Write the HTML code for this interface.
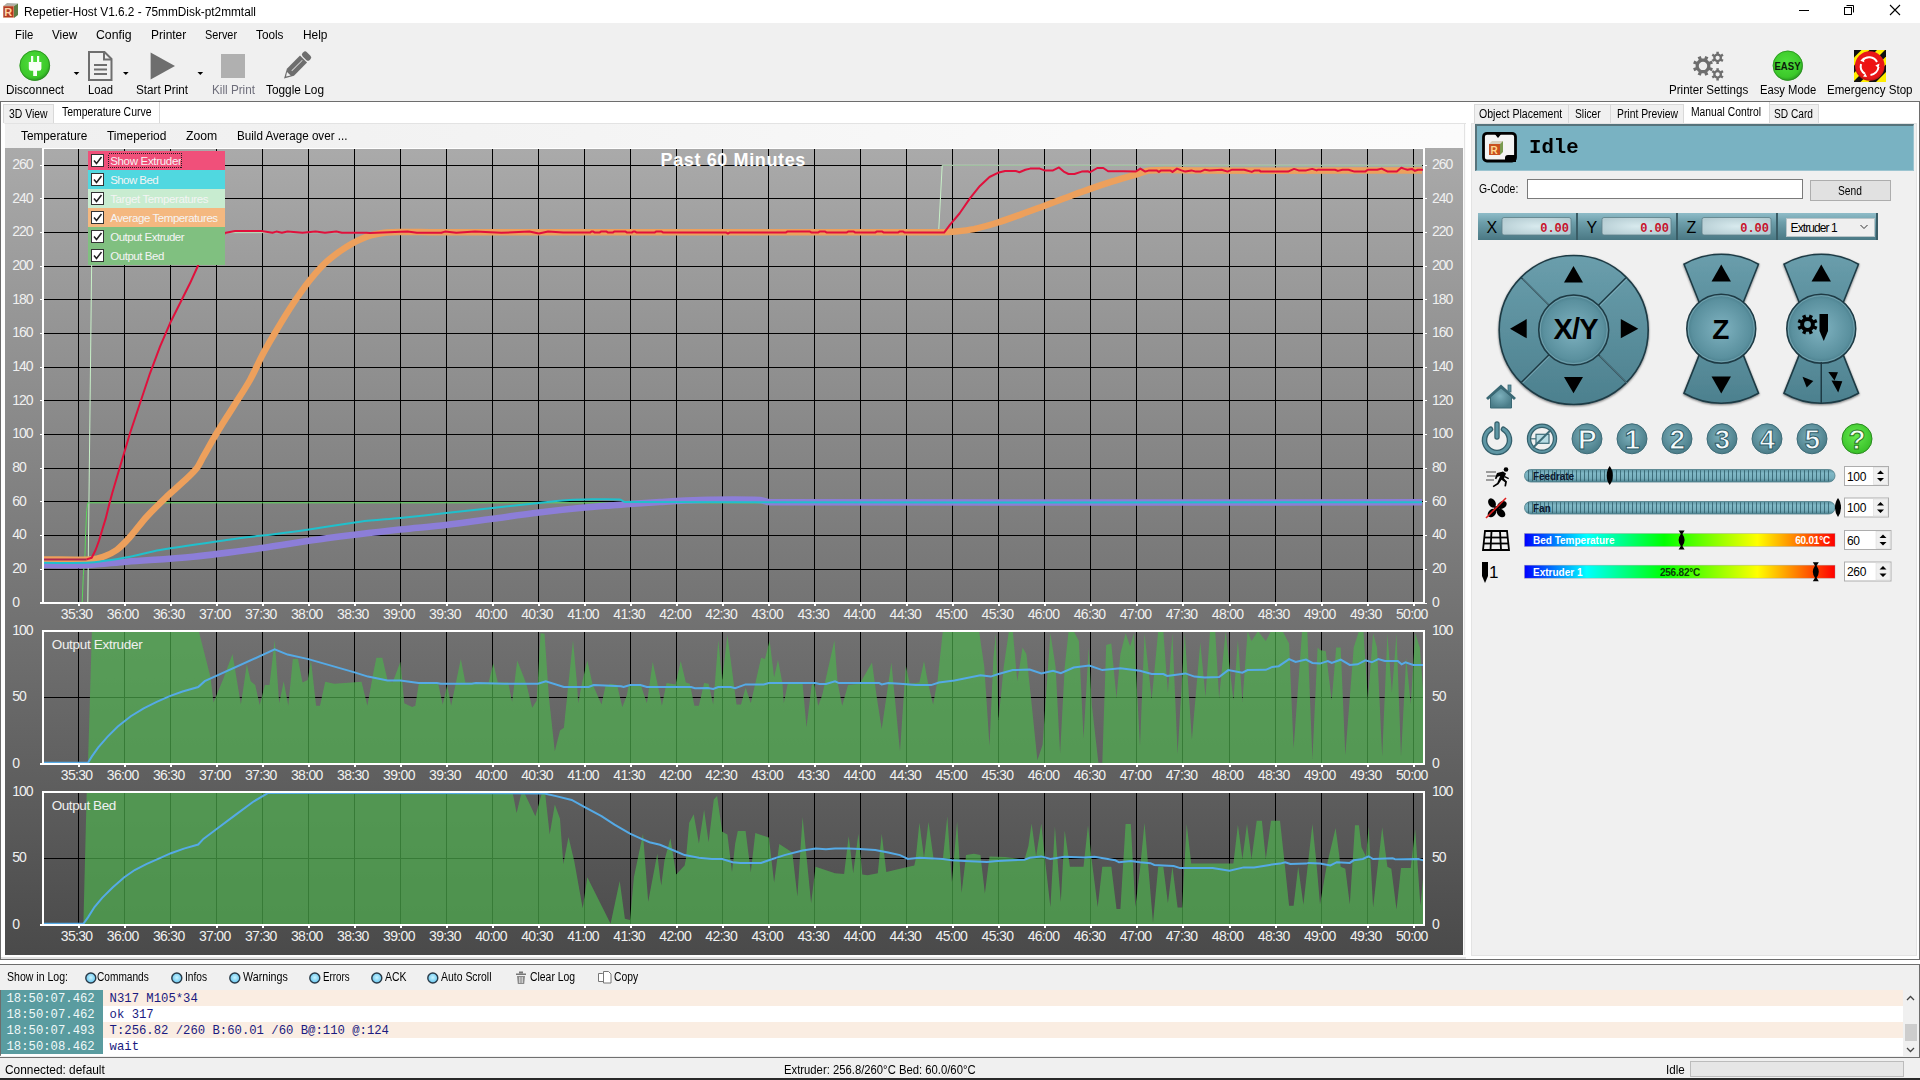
<!DOCTYPE html>
<html><head><meta charset="utf-8"><title>Repetier-Host</title><style>
*{box-sizing:border-box}
html,body{margin:0;padding:0;width:1920px;height:1080px;overflow:hidden;background:#f0f0f0;font-family:'Liberation Sans',sans-serif;font-size:12px;color:#000}
.a{position:absolute}
.t{position:absolute;white-space:nowrap;line-height:1}
svg{overflow:hidden}
</style></head>
<body>
<div class="a" style="left:0px;top:0px;width:1920px;height:23px;background:#fff"></div><svg class="a" style="left:0;top:0" width="22" height="22" viewBox="0 0 22 22">
<path d="M3.5 6 L7 3 L18 3.5 L14 6 Z" fill="#b0b0a8"/>
<path d="M14 6 L18 3.5 L18 15 L14 18 Z" fill="#5d7d44"/>
<rect x="3" y="5.8" width="11" height="12" fill="#e0a080"/>
<rect x="3.6" y="6.4" width="9.8" height="10.8" fill="#b23a22"/>
<text x="4.3" y="16.3" font-family="Liberation Sans" font-weight="bold" font-size="11" fill="#ffd2a4">R</text>
</svg><div class="t" style="left:24px;top:5.80px;font-size:12px;color:#000;font-family:'Liberation Sans';transform:scaleX(0.9855);transform-origin:0 0;">Repetier-Host V1.6.2 - 75mmDisk-pt2mmtall</div><svg class="a" style="left:1790px;top:0" width="130" height="23">
<rect x="9" y="10" width="10" height="1" fill="#000"/>
<path d="M56.5 5.5 h7 v7" fill="none" stroke="#000"/>
<rect x="54.5" y="7.5" width="7" height="7" fill="none" stroke="#000"/>
<path d="M100 5 L110 15 M110 5 L100 15" stroke="#000" stroke-width="1.1"/>
</svg><div class="t" style="left:15px;top:28.80px;font-size:12px;color:#000;font-family:'Liberation Sans';transform:scaleX(0.9435);transform-origin:0 0;">File</div><div class="t" style="left:51.75px;top:28.80px;font-size:12px;color:#000;font-family:'Liberation Sans';transform:scaleX(0.9788);transform-origin:0 0;">View</div><div class="t" style="left:96.25px;top:28.80px;font-size:12px;color:#000;font-family:'Liberation Sans';transform:scaleX(1.0234);transform-origin:0 0;">Config</div><div class="t" style="left:151px;top:28.80px;font-size:12px;color:#000;font-family:'Liberation Sans';transform:scaleX(0.9973);transform-origin:0 0;">Printer</div><div class="t" style="left:205px;top:28.80px;font-size:12px;color:#000;font-family:'Liberation Sans';transform:scaleX(0.9054);transform-origin:0 0;">Server</div><div class="t" style="left:256.25px;top:28.80px;font-size:12px;color:#000;font-family:'Liberation Sans';transform:scaleX(0.9816);transform-origin:0 0;">Tools</div><div class="t" style="left:303px;top:28.80px;font-size:12px;color:#000;font-family:'Liberation Sans';transform:scaleX(0.9924);transform-origin:0 0;">Help</div><svg class="a" style="left:0;top:40px" width="1920" height="50" viewBox="0 40 1920 50"><defs><radialGradient id="gg" cx="0.45" cy="0.4" r="0.6"><stop offset="0" stop-color="#4fe03c"/><stop offset="0.8" stop-color="#3cc82a"/><stop offset="1" stop-color="#2a9a22"/></radialGradient><radialGradient id="rg" cx="0.5" cy="0.45" r="0.55"><stop offset="0" stop-color="#f01010"/><stop offset="0.85" stop-color="#e81818"/><stop offset="1" stop-color="#b01010"/></radialGradient><clipPath id="esq"><rect x="1854" y="50" width="32" height="32"/></clipPath></defs><circle cx="34.8" cy="65.6" r="15.2" fill="url(#gg)"/><circle cx="34.8" cy="65.6" r="14.9" fill="none" stroke="#2a8a20" stroke-width="0.8"/><path d="M31 56 h2.2 v6 h3.8 v-6 h2.2 v6 h2.2 v6.5 q0,2.2 -2.2,2.2 h-2.2 v5.4 h-3.8 v-5.4 h-2.2 q-2.2,0 -2.2,-2.2 v-6.5 h2.2z" fill="#f8fff8"/><path d="M73.7 72 h5.6 l-2.8 3z" fill="#000"/><path d="M123 72 h5.6 l-2.8 3z" fill="#000"/><path d="M197.5 72 h5.6 l-2.8 3z" fill="#000"/><path d="M89 52 h15.5 l7 7 v21 h-22.5z" fill="none" stroke="#6e6e6e" stroke-width="2"/><path d="M104 52 v7.5 h7.5" fill="none" stroke="#6e6e6e" stroke-width="2"/><rect x="94" y="64" width="13" height="2" fill="#6e6e6e"/><rect x="94" y="68.5" width="13" height="2" fill="#6e6e6e"/><rect x="94" y="73" width="13" height="2" fill="#6e6e6e"/><path d="M150.6 52.5 L175 66 L150.6 79.4z" fill="#6e6e6e"/><rect x="221" y="54" width="24" height="24" fill="#b0b0b0"/><g transform="translate(296.3,66.3) rotate(45)"><rect x="-5" y="-17.5" width="10" height="6" rx="2.5" fill="#6e6e6e"/><path d="M-5 -10.2 h10 v18.5 l-5 9 l-5 -9z" fill="#6e6e6e"/><rect x="-0.45" y="-8.5" width="0.9" height="15" fill="#d8d8d8"/><path d="M-2.6 10.5 l2.6 4 l2.6 -4z" fill="#f0f0f0"/></g><path d="M1710.40,65.90 L1710.28,67.23 L1712.94,68.20 L1711.65,71.30 L1709.09,70.11 L1708.23,71.13 L1707.21,71.99 L1708.40,74.55 L1705.30,75.84 L1704.33,73.18 L1703.00,73.30 L1701.67,73.18 L1700.70,75.84 L1697.60,74.55 L1698.79,71.99 L1697.77,71.13 L1696.91,70.11 L1694.35,71.30 L1693.06,68.20 L1695.72,67.23 L1695.60,65.90 L1695.72,64.57 L1693.06,63.60 L1694.35,60.50 L1696.91,61.69 L1697.77,60.67 L1698.79,59.81 L1697.60,57.25 L1700.70,55.96 L1701.67,58.62 L1703.00,58.50 L1704.33,58.62 L1705.30,55.96 L1708.40,57.25 L1707.21,59.81 L1708.23,60.67 L1709.09,61.69 L1711.65,60.50 L1712.94,63.60 L1710.28,64.57Z M1707.20,65.90 A4.2,4.2 0 1,0 1698.80,65.90 A4.2,4.2 0 1,0 1707.20,65.90Z" fill="#6e6e6e" fill-rule="evenodd"/><path d="M1722.00,57.80 L1721.86,58.89 L1723.59,59.75 L1722.28,62.02 L1720.68,60.94 L1719.80,61.61 L1718.78,62.04 L1718.91,63.96 L1716.29,63.96 L1716.42,62.04 L1715.40,61.61 L1714.52,60.94 L1712.92,62.02 L1711.61,59.75 L1713.34,58.89 L1713.20,57.80 L1713.34,56.71 L1711.61,55.85 L1712.92,53.58 L1714.52,54.66 L1715.40,53.99 L1716.42,53.56 L1716.29,51.64 L1718.91,51.64 L1718.78,53.56 L1719.80,53.99 L1720.68,54.66 L1722.28,53.58 L1723.59,55.85 L1721.86,56.71Z M1719.70,57.80 A2.1,2.1 0 1,0 1715.50,57.80 A2.1,2.1 0 1,0 1719.70,57.80Z" fill="#6e6e6e" fill-rule="evenodd"/><path d="M1722.00,74.30 L1721.86,75.39 L1723.59,76.25 L1722.28,78.52 L1720.68,77.44 L1719.80,78.11 L1718.78,78.54 L1718.91,80.46 L1716.29,80.46 L1716.42,78.54 L1715.40,78.11 L1714.52,77.44 L1712.92,78.52 L1711.61,76.25 L1713.34,75.39 L1713.20,74.30 L1713.34,73.21 L1711.61,72.35 L1712.92,70.08 L1714.52,71.16 L1715.40,70.49 L1716.42,70.06 L1716.29,68.14 L1718.91,68.14 L1718.78,70.06 L1719.80,70.49 L1720.68,71.16 L1722.28,70.08 L1723.59,72.35 L1721.86,73.21Z M1719.70,74.30 A2.1,2.1 0 1,0 1715.50,74.30 A2.1,2.1 0 1,0 1719.70,74.30Z" fill="#6e6e6e" fill-rule="evenodd"/><circle cx="1787.8" cy="65.7" r="15" fill="url(#gg)"/><circle cx="1787.8" cy="65.7" r="14.7" fill="none" stroke="#2a8a20" stroke-width="0.7"/><text x="1774.5" y="69.8" font-family="Liberation Sans" font-weight="bold" font-size="10.4" fill="#0a1a0a" textLength="26" lengthAdjust="spacingAndGlyphs">EASY</text><g clip-path="url(#esq)"><rect x="1854" y="50" width="32" height="32" fill="#ffee00"/><path d="M1775.5 82 L1807.5 50 L1815.0 50 L1783.0 82z" fill="#111"/><path d="M1791.0 82 L1823.0 50 L1830.5 50 L1798.5 82z" fill="#111"/><path d="M1806.5 82 L1838.5 50 L1846.0 50 L1814.0 82z" fill="#111"/><path d="M1822.0 82 L1854.0 50 L1861.5 50 L1829.5 82z" fill="#111"/><path d="M1837.5 82 L1869.5 50 L1877.0 50 L1845.0 82z" fill="#111"/><path d="M1853.0 82 L1885.0 50 L1892.5 50 L1860.5 82z" fill="#111"/><path d="M1868.5 82 L1900.5 50 L1908.0 50 L1876.0 82z" fill="#111"/></g><circle cx="1869.8" cy="66" r="14.8" fill="url(#rg)"/><g fill="none" stroke="#fff" stroke-width="2"><path d="M1862.2 60.5 A9 9 0 0 1 1877 62"/><path d="M1878.5 67 A9 9 0 0 1 1870.5 75"/><path d="M1865 73.8 A9 9 0 0 1 1861 64"/></g><g fill="#fff"><path d="M1863.8 57.5 l-3.5 3.2 l4 1.5z"/><path d="M1879.5 63.5 l-1 4.5 l-3.2 -2.5z"/><path d="M1867 77 l-4 -0.5 l2.5 -3z"/></g></svg><div class="t" style="left:5.6px;top:83.80px;font-size:12px;color:#000;font-family:'Liberation Sans';transform:scaleX(0.9794);transform-origin:0 0;">Disconnect</div><div class="t" style="left:87.5px;top:83.80px;font-size:12px;color:#000;font-family:'Liberation Sans';transform:scaleX(0.9362);transform-origin:0 0;">Load</div><div class="t" style="left:136px;top:83.80px;font-size:12px;color:#000;font-family:'Liberation Sans';transform:scaleX(0.9745);transform-origin:0 0;">Start Print</div><div class="t" style="left:211.7px;top:83.80px;font-size:12px;color:#6d6d7a;font-family:'Liberation Sans';transform:scaleX(0.9769);transform-origin:0 0;">Kill Print</div><div class="t" style="left:266.4px;top:83.80px;font-size:12px;color:#000;font-family:'Liberation Sans';transform:scaleX(0.9878);transform-origin:0 0;">Toggle Log</div><div class="t" style="left:1668.8px;top:83.80px;font-size:12px;color:#000;font-family:'Liberation Sans';transform:scaleX(0.9653);transform-origin:0 0;">Printer Settings</div><div class="t" style="left:1759.5px;top:83.80px;font-size:12px;color:#000;font-family:'Liberation Sans';transform:scaleX(0.9362);transform-origin:0 0;">Easy Mode</div><div class="t" style="left:1827px;top:83.80px;font-size:12px;color:#000;font-family:'Liberation Sans';transform:scaleX(0.9637);transform-origin:0 0;">Emergency Stop</div><div class="a" style="left:0px;top:101px;width:1920px;height:1px;background:#6d6d6d"></div><div class="a" style="left:0px;top:102px;width:1466px;height:1px;background:#fff"></div><div class="a" style="left:0px;top:101px;width:1px;height:862px;background:#6d6d6d"></div><div class="a" style="left:1px;top:102px;width:1465px;height:862px;background:#fff"></div><div class="a" style="left:3px;top:104px;width:51px;height:19px;background:#f0f0f0;border:1px solid #d9d9d9;border-bottom:none"></div><div class="t" style="left:9.4px;top:107.80px;font-size:12px;color:#000;font-family:'Liberation Sans';transform:scaleX(0.8658);transform-origin:0 0;">3D View</div><div class="a" style="left:159px;top:102px;width:1px;height:21px;background:#d9d9d9"></div><div class="t" style="left:61.5px;top:106.30px;font-size:12px;color:#000;font-family:'Liberation Sans';transform:scaleX(0.8713);transform-origin:0 0;">Temperature Curve</div><div class="a" style="left:4px;top:123px;width:1462px;height:838px;background:linear-gradient(to right,#efefef,#f4f4f4 40%,#fafafa 80%,#fbfbfb);border-left:1px solid #fff;border-top:1px solid #e3e3e3"></div><div class="a" style="left:1464px;top:123px;width:1px;height:838px;background:#e3e3e3"></div><div class="t" style="left:20.8px;top:129.80px;font-size:12px;color:#000;font-family:'Liberation Sans';transform:scaleX(0.9826);transform-origin:0 0;">Temperature</div><div class="t" style="left:107.3px;top:129.80px;font-size:12px;color:#000;font-family:'Liberation Sans';transform:scaleX(0.9970);transform-origin:0 0;">Timeperiod</div><div class="t" style="left:186.25px;top:129.80px;font-size:12px;color:#000;font-family:'Liberation Sans';transform:scaleX(1.0183);transform-origin:0 0;">Zoom</div><div class="t" style="left:237px;top:129.80px;font-size:12px;color:#000;font-family:'Liberation Sans';transform:scaleX(0.9705);transform-origin:0 0;">Build Average over ...</div><svg class="a" style="left:5px;top:148px" width="1458" height="807" viewBox="5 148 1458 807" shape-rendering="crispEdges"><defs><linearGradient id="bg" x1="0" y1="148" x2="0" y2="955" gradientUnits="userSpaceOnUse"><stop offset="0" stop-color="#aaaaaa"/><stop offset="1" stop-color="#4a4a4a"/></linearGradient><clipPath id="c1"><rect x="44" y="149" width="1379" height="453"/></clipPath><clipPath id="c2"><rect x="44" y="632" width="1379" height="131"/></clipPath><clipPath id="c3"><rect x="44" y="793" width="1379" height="131"/></clipPath></defs><rect x="5" y="148" width="1458" height="807" fill="url(#bg)"/><rect x="78" y="149" width="1" height="453" fill="#000"/><rect x="124" y="149" width="1" height="453" fill="#000"/><rect x="170" y="149" width="1" height="453" fill="#000"/><rect x="216" y="149" width="1" height="453" fill="#000"/><rect x="262" y="149" width="1" height="453" fill="#000"/><rect x="308" y="149" width="1" height="453" fill="#000"/><rect x="354" y="149" width="1" height="453" fill="#000"/><rect x="400" y="149" width="1" height="453" fill="#000"/><rect x="446" y="149" width="1" height="453" fill="#000"/><rect x="492" y="149" width="1" height="453" fill="#000"/><rect x="538" y="149" width="1" height="453" fill="#000"/><rect x="584" y="149" width="1" height="453" fill="#000"/><rect x="630" y="149" width="1" height="453" fill="#000"/><rect x="676" y="149" width="1" height="453" fill="#000"/><rect x="722" y="149" width="1" height="453" fill="#000"/><rect x="768" y="149" width="1" height="453" fill="#000"/><rect x="814" y="149" width="1" height="453" fill="#000"/><rect x="860" y="149" width="1" height="453" fill="#000"/><rect x="906" y="149" width="1" height="453" fill="#000"/><rect x="952" y="149" width="1" height="453" fill="#000"/><rect x="998" y="149" width="1" height="453" fill="#000"/><rect x="1044" y="149" width="1" height="453" fill="#000"/><rect x="1090" y="149" width="1" height="453" fill="#000"/><rect x="1136" y="149" width="1" height="453" fill="#000"/><rect x="1182" y="149" width="1" height="453" fill="#000"/><rect x="1229" y="149" width="1" height="453" fill="#000"/><rect x="1275" y="149" width="1" height="453" fill="#000"/><rect x="1321" y="149" width="1" height="453" fill="#000"/><rect x="1367" y="149" width="1" height="453" fill="#000"/><rect x="1413" y="149" width="1" height="453" fill="#000"/><rect x="44" y="569" width="1379" height="1" fill="#000"/><rect x="44" y="535" width="1379" height="1" fill="#000"/><rect x="44" y="501" width="1379" height="1" fill="#000"/><rect x="44" y="468" width="1379" height="1" fill="#000"/><rect x="44" y="434" width="1379" height="1" fill="#000"/><rect x="44" y="400" width="1379" height="1" fill="#000"/><rect x="44" y="367" width="1379" height="1" fill="#000"/><rect x="44" y="333" width="1379" height="1" fill="#000"/><rect x="44" y="299" width="1379" height="1" fill="#000"/><rect x="44" y="266" width="1379" height="1" fill="#000"/><rect x="44" y="232" width="1379" height="1" fill="#000"/><rect x="44" y="198" width="1379" height="1" fill="#000"/><rect x="44" y="165" width="1379" height="1" fill="#000"/><g clip-path="url(#c1)" shape-rendering="geometricPrecision" fill="none" stroke-linejoin="round"><polyline points="44.0,606.0 87.8,606.0 87.8,602.0 92.0,232.6 938.6,232.6 942.2,165.3 1422.0,165.3" stroke="#c8f0c8" stroke-width="1"/><polyline points="44.0,606.0 82.0,606.0 82.2,602.2 83.3,575.6 85.0,554.4 85.6,533.3 86.7,510.5 87.8,502.8 1422.0,502.8" stroke="#5cd65c" stroke-width="1"/><path d="M44.0,565.0 C58.2,565.0 72.5,565.6 86.7,565.0 C100.0,564.5 113.4,562.7 126.7,561.7 C148.9,560.0 171.1,558.9 193.3,556.7 C215.5,554.5 237.8,551.4 260.0,548.3 C282.2,545.2 304.5,541.3 326.7,538.3 C351.1,535.0 375.6,532.2 400.0,529.5 C415.3,527.8 430.7,526.8 446.0,525.0 C461.5,523.2 477.0,520.8 492.5,518.8 C507.9,516.7 523.3,514.4 538.8,512.5 C554.2,510.6 569.6,508.9 585.0,507.5 C600.0,506.1 615.0,505.1 630.0,504.0 C640.0,503.3 650.0,502.6 660.0,502.0 C673.3,501.2 686.7,500.3 700.0,500.0 C720.0,499.6 740.0,499.3 760.0,500.0 C763.3,500.1 766.7,502.3 770.0,502.3 C987.3,503.1 1204.7,502.3 1422.0,502.3" stroke="#8c7ed8" stroke-width="6.5"/><path d="M44.0,559.4 C59.7,559.4 75.3,560.1 91.0,559.4 C95.1,559.2 99.2,558.2 103.3,556.7 C107.8,555.1 112.2,553.3 116.7,550.0 C121.1,546.7 125.6,541.9 130.0,537.0 C135.6,530.8 141.1,522.8 146.7,516.7 C153.4,509.4 160.0,503.1 166.7,496.7 C172.2,491.4 177.8,486.9 183.3,481.7 C187.8,477.5 192.2,473.9 196.7,468.3 C198.9,465.6 201.1,460.6 203.3,456.7 C207.8,448.9 212.2,440.7 216.7,433.3 C222.2,424.1 227.8,415.6 233.3,406.7 C238.9,397.8 244.4,389.9 250.0,380.0 C254.4,372.1 258.9,361.6 263.3,353.3 C267.8,344.9 272.2,337.4 276.7,330.0 C282.2,320.8 287.8,311.6 293.3,303.3 C298.9,294.9 304.4,286.9 310.0,280.0 C315.6,273.1 321.1,266.8 326.7,261.7 C333.4,255.7 340.0,250.9 346.7,246.7 C353.4,242.5 360.0,239.1 366.7,236.7 C373.4,234.3 380.0,233.3 386.7,232.5 C393.4,231.7 400.0,232.0 406.7,232.0 C414.5,231.9 422.2,232.2 430.0,232.2 C600.7,232.3 771.3,232.4 942.0,232.2 C946.6,232.2 951.3,231.9 955.9,231.5 C961.9,230.9 967.9,230.3 973.9,229.1 C981.9,227.3 989.9,225.0 997.9,222.5 C1005.8,220.0 1013.8,217.0 1021.8,214.1 C1029.4,211.4 1037.0,208.5 1044.6,205.7 C1051.0,203.3 1057.4,200.9 1063.7,198.5 C1072.5,195.3 1081.3,192.0 1090.1,188.9 C1097.3,186.4 1104.5,184.0 1111.7,181.7 C1119.6,179.2 1127.6,176.9 1135.6,174.6 C1140.4,173.1 1145.2,170.7 1150.0,170.4 C1166.7,169.3 1183.3,170.6 1200.0,170.6 C1274.0,170.7 1348.0,170.6 1422.0,170.6" stroke="#eda05c" stroke-width="6.5"/><path d="M44.0,562.8 C58.2,562.8 72.5,563.2 86.7,562.8 C92.2,562.6 97.8,561.9 103.3,561.1 C112.2,559.8 121.1,558.4 130.0,556.7 C140.0,554.7 150.0,551.7 160.0,550.0 C182.2,546.2 204.5,543.1 226.7,540.0 C248.9,537.0 271.1,534.7 293.3,531.7 C315.5,528.6 337.8,524.6 360.0,521.7 C373.3,520.0 386.7,519.3 400.0,518.0 C415.3,516.4 430.7,514.7 446.0,513.0 C461.5,511.3 477.0,509.7 492.5,508.0 C507.9,506.3 523.3,504.7 538.8,503.0 C546.7,502.2 554.6,501.1 562.5,500.5 C570.0,499.9 577.5,499.6 585.0,499.5 C596.7,499.3 608.3,498.8 620.0,499.5 C621.7,499.6 623.3,502.0 625.0,502.0 C890.7,502.9 1156.3,502.2 1422.0,502.3" stroke="#20c0cc" stroke-width="2"/><polyline points="44.0,559.4 86.7,559.4" stroke="#a82850" stroke-width="2"/><polyline points="86.7,559.4 91.7,557.8 95.6,550.0 98.9,541.0 102.2,530.0 105.6,518.9 108.9,505.6 112.2,493.3 120.0,466.7 130.0,433.3 140.0,403.3 150.0,373.3 160.0,346.7 170.0,323.3 180.0,303.3 190.0,283.3 198.3,265.0 206.7,250.0 216.7,238.3 225.0,233.3 224.7,233.1 235.0,230.9 261.3,230.9 272.5,232.8 276.3,231.6 281.9,232.8 287.5,231.6 302.5,232.8 315.6,231.6 325.0,232.8 336.3,231.6 341.9,232.8 366.3,232.8 370.0,233.1 407.5,231.6 416.9,232.8 441.3,232.8 445.0,231.6 456.3,232.8 475.0,231.6 501.3,232.8 529.4,231.6 538.8,233.5 548.1,231.6 563.1,232.4 580.0,232.4 580.0,232.6 589.9,232.6 591.4,231.6 593.3,231.6 594.8,232.6 599.4,232.6 600.9,231.6 606.6,231.6 608.1,232.6 612.7,232.6 614.2,231.6 625.6,231.6 627.1,232.6 631.7,232.6 633.2,231.6 635.1,231.6 636.7,232.6 654.5,232.6 656.0,231.6 661.7,231.6 663.3,232.6 726.4,232.6 727.9,233.6 729.4,232.6 785.7,232.6 787.2,231.6 810.0,231.6 811.6,232.6 818.0,232.6 819.5,231.6 825.2,231.6 826.8,232.6 846.5,232.6 848.1,231.6 853.8,231.6 855.3,232.6 875.1,232.6 876.6,231.6 882.3,231.6 883.8,232.6 897.9,232.6 899.4,231.6 903.2,231.6 904.7,232.6 944.1,232.6 949.9,224.9 959.5,213.5 970.3,197.9 979.9,185.9 989.5,177.0 997.9,172.8 1005.1,171.0 1015.8,171.0 1019.4,172.2 1025.4,169.8 1030.2,168.6 1039.8,168.6 1044.6,170.4 1053.0,170.4 1059.0,167.4 1063.7,171.6 1068.5,174.0 1074.5,174.0 1081.7,171.6 1087.7,171.3 1090.1,172.2 1097.3,168.0 1103.3,168.0 1108.1,171.3 1123.6,171.3 1135.6,171.6 1140.4,168.6 1145.2,171.6 1149.1,170.4 1156.6,170.4 1158.9,171.9 1161.1,170.4 1170.2,170.4 1172.5,171.9 1177.0,168.6 1180.8,170.1 1185.3,171.6 1191.4,170.4 1195.9,171.6 1200.4,171.6 1205.0,169.7 1209.5,170.4 1221.6,169.7 1227.6,171.6 1232.1,169.7 1244.2,169.7 1251.8,171.9 1254.8,170.4 1259.3,170.4 1260.8,171.6 1288.0,171.6 1294.1,168.9 1298.6,170.4 1306.2,170.4 1312.2,168.9 1316.7,170.4 1318.2,169.7 1334.9,169.7 1337.9,170.9 1342.4,169.7 1348.5,169.7 1354.5,171.6 1365.1,171.6 1368.1,169.7 1377.2,169.7 1381.7,168.6 1387.7,171.6 1396.8,171.6 1401.3,167.8 1404.4,168.9 1407.4,169.7 1411.9,168.9 1414.9,170.9 1417.9,169.7 1424.0,169.7" stroke="#e0103c" stroke-width="2"/></g><rect x="42" y="148" width="1383" height="1" fill="#fff"/><rect x="40" y="602" width="1385" height="2" fill="#fff"/><rect x="42" y="148" width="2" height="456" fill="#fff"/><rect x="1423" y="148" width="2" height="456" fill="#fff"/><rect x="78" y="604" width="2" height="2" fill="#fff"/><text x="60.80" y="619.10" font-family="Liberation Sans" font-size="14" fill="#f0f0f0" letter-spacing="-0.669" shape-rendering="geometricPrecision">35:30</text><rect x="124" y="604" width="2" height="2" fill="#fff"/><text x="106.84" y="619.10" font-family="Liberation Sans" font-size="14" fill="#f0f0f0" letter-spacing="-0.669" shape-rendering="geometricPrecision">36:00</text><rect x="170" y="604" width="2" height="2" fill="#fff"/><text x="152.88" y="619.10" font-family="Liberation Sans" font-size="14" fill="#f0f0f0" letter-spacing="-0.669" shape-rendering="geometricPrecision">36:30</text><rect x="216" y="604" width="2" height="2" fill="#fff"/><text x="198.92" y="619.10" font-family="Liberation Sans" font-size="14" fill="#f0f0f0" letter-spacing="-0.669" shape-rendering="geometricPrecision">37:00</text><rect x="262" y="604" width="2" height="2" fill="#fff"/><text x="244.96" y="619.10" font-family="Liberation Sans" font-size="14" fill="#f0f0f0" letter-spacing="-0.669" shape-rendering="geometricPrecision">37:30</text><rect x="308" y="604" width="2" height="2" fill="#fff"/><text x="291.00" y="619.10" font-family="Liberation Sans" font-size="14" fill="#f0f0f0" letter-spacing="-0.669" shape-rendering="geometricPrecision">38:00</text><rect x="354" y="604" width="2" height="2" fill="#fff"/><text x="337.04" y="619.10" font-family="Liberation Sans" font-size="14" fill="#f0f0f0" letter-spacing="-0.669" shape-rendering="geometricPrecision">38:30</text><rect x="400" y="604" width="2" height="2" fill="#fff"/><text x="383.08" y="619.10" font-family="Liberation Sans" font-size="14" fill="#f0f0f0" letter-spacing="-0.669" shape-rendering="geometricPrecision">39:00</text><rect x="446" y="604" width="2" height="2" fill="#fff"/><text x="429.12" y="619.10" font-family="Liberation Sans" font-size="14" fill="#f0f0f0" letter-spacing="-0.669" shape-rendering="geometricPrecision">39:30</text><rect x="492" y="604" width="2" height="2" fill="#fff"/><text x="475.16" y="619.10" font-family="Liberation Sans" font-size="14" fill="#f0f0f0" letter-spacing="-0.669" shape-rendering="geometricPrecision">40:00</text><rect x="538" y="604" width="2" height="2" fill="#fff"/><text x="521.20" y="619.10" font-family="Liberation Sans" font-size="14" fill="#f0f0f0" letter-spacing="-0.669" shape-rendering="geometricPrecision">40:30</text><rect x="584" y="604" width="2" height="2" fill="#fff"/><text x="567.24" y="619.10" font-family="Liberation Sans" font-size="14" fill="#f0f0f0" letter-spacing="-0.669" shape-rendering="geometricPrecision">41:00</text><rect x="630" y="604" width="2" height="2" fill="#fff"/><text x="613.28" y="619.10" font-family="Liberation Sans" font-size="14" fill="#f0f0f0" letter-spacing="-0.669" shape-rendering="geometricPrecision">41:30</text><rect x="676" y="604" width="2" height="2" fill="#fff"/><text x="659.32" y="619.10" font-family="Liberation Sans" font-size="14" fill="#f0f0f0" letter-spacing="-0.669" shape-rendering="geometricPrecision">42:00</text><rect x="722" y="604" width="2" height="2" fill="#fff"/><text x="705.36" y="619.10" font-family="Liberation Sans" font-size="14" fill="#f0f0f0" letter-spacing="-0.669" shape-rendering="geometricPrecision">42:30</text><rect x="768" y="604" width="2" height="2" fill="#fff"/><text x="751.40" y="619.10" font-family="Liberation Sans" font-size="14" fill="#f0f0f0" letter-spacing="-0.669" shape-rendering="geometricPrecision">43:00</text><rect x="814" y="604" width="2" height="2" fill="#fff"/><text x="797.44" y="619.10" font-family="Liberation Sans" font-size="14" fill="#f0f0f0" letter-spacing="-0.669" shape-rendering="geometricPrecision">43:30</text><rect x="860" y="604" width="2" height="2" fill="#fff"/><text x="843.48" y="619.10" font-family="Liberation Sans" font-size="14" fill="#f0f0f0" letter-spacing="-0.669" shape-rendering="geometricPrecision">44:00</text><rect x="906" y="604" width="2" height="2" fill="#fff"/><text x="889.52" y="619.10" font-family="Liberation Sans" font-size="14" fill="#f0f0f0" letter-spacing="-0.669" shape-rendering="geometricPrecision">44:30</text><rect x="952" y="604" width="2" height="2" fill="#fff"/><text x="935.56" y="619.10" font-family="Liberation Sans" font-size="14" fill="#f0f0f0" letter-spacing="-0.669" shape-rendering="geometricPrecision">45:00</text><rect x="998" y="604" width="2" height="2" fill="#fff"/><text x="981.60" y="619.10" font-family="Liberation Sans" font-size="14" fill="#f0f0f0" letter-spacing="-0.669" shape-rendering="geometricPrecision">45:30</text><rect x="1044" y="604" width="2" height="2" fill="#fff"/><text x="1027.64" y="619.10" font-family="Liberation Sans" font-size="14" fill="#f0f0f0" letter-spacing="-0.669" shape-rendering="geometricPrecision">46:00</text><rect x="1090" y="604" width="2" height="2" fill="#fff"/><text x="1073.68" y="619.10" font-family="Liberation Sans" font-size="14" fill="#f0f0f0" letter-spacing="-0.669" shape-rendering="geometricPrecision">46:30</text><rect x="1136" y="604" width="2" height="2" fill="#fff"/><text x="1119.72" y="619.10" font-family="Liberation Sans" font-size="14" fill="#f0f0f0" letter-spacing="-0.669" shape-rendering="geometricPrecision">47:00</text><rect x="1182" y="604" width="2" height="2" fill="#fff"/><text x="1165.76" y="619.10" font-family="Liberation Sans" font-size="14" fill="#f0f0f0" letter-spacing="-0.669" shape-rendering="geometricPrecision">47:30</text><rect x="1229" y="604" width="2" height="2" fill="#fff"/><text x="1211.80" y="619.10" font-family="Liberation Sans" font-size="14" fill="#f0f0f0" letter-spacing="-0.669" shape-rendering="geometricPrecision">48:00</text><rect x="1275" y="604" width="2" height="2" fill="#fff"/><text x="1257.84" y="619.10" font-family="Liberation Sans" font-size="14" fill="#f0f0f0" letter-spacing="-0.669" shape-rendering="geometricPrecision">48:30</text><rect x="1321" y="604" width="2" height="2" fill="#fff"/><text x="1303.88" y="619.10" font-family="Liberation Sans" font-size="14" fill="#f0f0f0" letter-spacing="-0.669" shape-rendering="geometricPrecision">49:00</text><rect x="1367" y="604" width="2" height="2" fill="#fff"/><text x="1349.92" y="619.10" font-family="Liberation Sans" font-size="14" fill="#f0f0f0" letter-spacing="-0.669" shape-rendering="geometricPrecision">49:30</text><rect x="1413" y="604" width="2" height="2" fill="#fff"/><text x="1395.96" y="619.10" font-family="Liberation Sans" font-size="14" fill="#f0f0f0" letter-spacing="-0.669" shape-rendering="geometricPrecision">50:00</text><rect x="40" y="603" width="2" height="1" fill="#fff"/><rect x="1425" y="603" width="2" height="1" fill="#fff"/><text x="12.20" y="606.80" font-family="Liberation Sans" font-size="14" fill="#f0f0f0" letter-spacing="-1.097">0</text><text x="1432.00" y="606.80" font-family="Liberation Sans" font-size="14" fill="#f0f0f0" letter-spacing="-1.097">0</text><rect x="40" y="569" width="2" height="1" fill="#fff"/><rect x="1425" y="569" width="2" height="1" fill="#fff"/><text x="12.20" y="573.13" font-family="Liberation Sans" font-size="14" fill="#f0f0f0" letter-spacing="-0.989">20</text><text x="1432.00" y="573.13" font-family="Liberation Sans" font-size="14" fill="#f0f0f0" letter-spacing="-0.989">20</text><rect x="40" y="535" width="2" height="1" fill="#fff"/><rect x="1425" y="535" width="2" height="1" fill="#fff"/><text x="12.20" y="539.46" font-family="Liberation Sans" font-size="14" fill="#f0f0f0" letter-spacing="-0.989">40</text><text x="1432.00" y="539.46" font-family="Liberation Sans" font-size="14" fill="#f0f0f0" letter-spacing="-0.989">40</text><rect x="40" y="501" width="2" height="1" fill="#fff"/><rect x="1425" y="501" width="2" height="1" fill="#fff"/><text x="12.20" y="505.79" font-family="Liberation Sans" font-size="14" fill="#f0f0f0" letter-spacing="-0.989">60</text><text x="1432.00" y="505.79" font-family="Liberation Sans" font-size="14" fill="#f0f0f0" letter-spacing="-0.989">60</text><rect x="40" y="468" width="2" height="1" fill="#fff"/><rect x="1425" y="468" width="2" height="1" fill="#fff"/><text x="12.20" y="472.12" font-family="Liberation Sans" font-size="14" fill="#f0f0f0" letter-spacing="-0.989">80</text><text x="1432.00" y="472.12" font-family="Liberation Sans" font-size="14" fill="#f0f0f0" letter-spacing="-0.989">80</text><rect x="40" y="434" width="2" height="1" fill="#fff"/><rect x="1425" y="434" width="2" height="1" fill="#fff"/><text x="12.20" y="438.45" font-family="Liberation Sans" font-size="14" fill="#f0f0f0" letter-spacing="-0.986">100</text><text x="1432.00" y="438.45" font-family="Liberation Sans" font-size="14" fill="#f0f0f0" letter-spacing="-0.986">100</text><rect x="40" y="400" width="2" height="1" fill="#fff"/><rect x="1425" y="400" width="2" height="1" fill="#fff"/><text x="12.20" y="404.78" font-family="Liberation Sans" font-size="14" fill="#f0f0f0" letter-spacing="-0.986">120</text><text x="1432.00" y="404.78" font-family="Liberation Sans" font-size="14" fill="#f0f0f0" letter-spacing="-0.986">120</text><rect x="40" y="367" width="2" height="1" fill="#fff"/><rect x="1425" y="367" width="2" height="1" fill="#fff"/><text x="12.20" y="371.11" font-family="Liberation Sans" font-size="14" fill="#f0f0f0" letter-spacing="-0.986">140</text><text x="1432.00" y="371.11" font-family="Liberation Sans" font-size="14" fill="#f0f0f0" letter-spacing="-0.986">140</text><rect x="40" y="333" width="2" height="1" fill="#fff"/><rect x="1425" y="333" width="2" height="1" fill="#fff"/><text x="12.20" y="337.44" font-family="Liberation Sans" font-size="14" fill="#f0f0f0" letter-spacing="-0.986">160</text><text x="1432.00" y="337.44" font-family="Liberation Sans" font-size="14" fill="#f0f0f0" letter-spacing="-0.986">160</text><rect x="40" y="299" width="2" height="1" fill="#fff"/><rect x="1425" y="299" width="2" height="1" fill="#fff"/><text x="12.20" y="303.77" font-family="Liberation Sans" font-size="14" fill="#f0f0f0" letter-spacing="-0.986">180</text><text x="1432.00" y="303.77" font-family="Liberation Sans" font-size="14" fill="#f0f0f0" letter-spacing="-0.986">180</text><rect x="40" y="266" width="2" height="1" fill="#fff"/><rect x="1425" y="266" width="2" height="1" fill="#fff"/><text x="12.20" y="270.10" font-family="Liberation Sans" font-size="14" fill="#f0f0f0" letter-spacing="-0.986">200</text><text x="1432.00" y="270.10" font-family="Liberation Sans" font-size="14" fill="#f0f0f0" letter-spacing="-0.986">200</text><rect x="40" y="232" width="2" height="1" fill="#fff"/><rect x="1425" y="232" width="2" height="1" fill="#fff"/><text x="12.20" y="236.43" font-family="Liberation Sans" font-size="14" fill="#f0f0f0" letter-spacing="-0.986">220</text><text x="1432.00" y="236.43" font-family="Liberation Sans" font-size="14" fill="#f0f0f0" letter-spacing="-0.986">220</text><rect x="40" y="198" width="2" height="1" fill="#fff"/><rect x="1425" y="198" width="2" height="1" fill="#fff"/><text x="12.20" y="202.76" font-family="Liberation Sans" font-size="14" fill="#f0f0f0" letter-spacing="-0.986">240</text><text x="1432.00" y="202.76" font-family="Liberation Sans" font-size="14" fill="#f0f0f0" letter-spacing="-0.986">240</text><rect x="40" y="165" width="2" height="1" fill="#fff"/><rect x="1425" y="165" width="2" height="1" fill="#fff"/><text x="12.20" y="169.09" font-family="Liberation Sans" font-size="14" fill="#f0f0f0" letter-spacing="-0.986">260</text><text x="1432.00" y="169.09" font-family="Liberation Sans" font-size="14" fill="#f0f0f0" letter-spacing="-0.986">260</text><text x="660.60" y="166.40" font-family="Liberation Sans" font-size="18" font-weight="bold" fill="#fff" letter-spacing="0.617">Past 60 Minutes</text><rect x="88" y="151" width="137" height="19" fill="#f0507a"/><rect x="91.5" y="154.5" width="12" height="12" fill="#fff" stroke="#333" stroke-width="1"/><path d="M94 160.5 L96.5 163.5 L101.5 157" fill="none" stroke="#222" stroke-width="1.5" shape-rendering="geometricPrecision"/><text x="110.20" y="165.00" font-family="Liberation Sans" font-size="11.5" fill="#f4f4f4" letter-spacing="-0.318">Show Extruder</text><rect x="88" y="170" width="137" height="19" fill="#50d8e0"/><rect x="91.5" y="173.5" width="12" height="12" fill="#fff" stroke="#333" stroke-width="1"/><path d="M94 179.5 L96.5 182.5 L101.5 176" fill="none" stroke="#222" stroke-width="1.5" shape-rendering="geometricPrecision"/><text x="110.20" y="184.00" font-family="Liberation Sans" font-size="11.5" fill="#f4f4f4" letter-spacing="-0.567">Show Bed</text><rect x="88" y="189" width="137" height="19" fill="#c8ecd0"/><rect x="91.5" y="192.5" width="12" height="12" fill="#fff" stroke="#333" stroke-width="1"/><path d="M94 198.5 L96.5 201.5 L101.5 195" fill="none" stroke="#222" stroke-width="1.5" shape-rendering="geometricPrecision"/><text x="110.20" y="203.00" font-family="Liberation Sans" font-size="11.5" fill="#f4f4f4" letter-spacing="-0.388">Target Temperatures</text><rect x="88" y="208" width="137" height="19" fill="#f4b880"/><rect x="91.5" y="211.5" width="12" height="12" fill="#fff" stroke="#333" stroke-width="1"/><path d="M94 217.5 L96.5 220.5 L101.5 214" fill="none" stroke="#222" stroke-width="1.5" shape-rendering="geometricPrecision"/><text x="110.20" y="222.00" font-family="Liberation Sans" font-size="11.5" fill="#f4f4f4" letter-spacing="-0.421">Average Temperatures</text><rect x="88" y="227" width="137" height="19" fill="#80c080"/><rect x="91.5" y="230.5" width="12" height="12" fill="#fff" stroke="#333" stroke-width="1"/><path d="M94 236.5 L96.5 239.5 L101.5 233" fill="none" stroke="#222" stroke-width="1.5" shape-rendering="geometricPrecision"/><text x="110.20" y="241.00" font-family="Liberation Sans" font-size="11.5" fill="#f4f4f4" letter-spacing="-0.486">Output Extruder</text><rect x="88" y="246" width="137" height="19" fill="#80c080"/><rect x="91.5" y="249.5" width="12" height="12" fill="#fff" stroke="#333" stroke-width="1"/><path d="M94 255.5 L96.5 258.5 L101.5 252" fill="none" stroke="#222" stroke-width="1.5" shape-rendering="geometricPrecision"/><text x="110.20" y="260.00" font-family="Liberation Sans" font-size="11.5" fill="#f4f4f4" letter-spacing="-0.449">Output Bed</text><rect x="108.5" y="153.5" width="73" height="14" fill="none" stroke="#222" stroke-width="1" stroke-dasharray="1,1"/><rect x="78" y="632" width="1" height="131" fill="#000"/><rect x="124" y="632" width="1" height="131" fill="#000"/><rect x="170" y="632" width="1" height="131" fill="#000"/><rect x="216" y="632" width="1" height="131" fill="#000"/><rect x="262" y="632" width="1" height="131" fill="#000"/><rect x="308" y="632" width="1" height="131" fill="#000"/><rect x="354" y="632" width="1" height="131" fill="#000"/><rect x="400" y="632" width="1" height="131" fill="#000"/><rect x="446" y="632" width="1" height="131" fill="#000"/><rect x="492" y="632" width="1" height="131" fill="#000"/><rect x="538" y="632" width="1" height="131" fill="#000"/><rect x="584" y="632" width="1" height="131" fill="#000"/><rect x="630" y="632" width="1" height="131" fill="#000"/><rect x="676" y="632" width="1" height="131" fill="#000"/><rect x="722" y="632" width="1" height="131" fill="#000"/><rect x="768" y="632" width="1" height="131" fill="#000"/><rect x="814" y="632" width="1" height="131" fill="#000"/><rect x="860" y="632" width="1" height="131" fill="#000"/><rect x="906" y="632" width="1" height="131" fill="#000"/><rect x="952" y="632" width="1" height="131" fill="#000"/><rect x="998" y="632" width="1" height="131" fill="#000"/><rect x="1044" y="632" width="1" height="131" fill="#000"/><rect x="1090" y="632" width="1" height="131" fill="#000"/><rect x="1136" y="632" width="1" height="131" fill="#000"/><rect x="1182" y="632" width="1" height="131" fill="#000"/><rect x="1229" y="632" width="1" height="131" fill="#000"/><rect x="1275" y="632" width="1" height="131" fill="#000"/><rect x="1321" y="632" width="1" height="131" fill="#000"/><rect x="1367" y="632" width="1" height="131" fill="#000"/><rect x="1413" y="632" width="1" height="131" fill="#000"/><rect x="44" y="697" width="1379" height="1" fill="#000"/><g clip-path="url(#c2)" shape-rendering="geometricPrecision"><polygon points="44.0,764.0 88.0,762.8 91.9,631.2 198.8,631.2 210.5,677.3 213.5,702.6 222.8,679.9 232.5,653.9 240.9,704.5 246.8,664.3 250.7,681.2 255.2,685.1 259.7,705.1 264.9,685.1 269.5,685.1 274.7,639.7 279.2,703.2 283.7,681.2 288.3,705.8 292.8,659.1 298.0,659.1 302.5,682.5 307.7,679.9 311.0,660.4 316.1,705.8 320.0,705.8 325.2,681.8 334.3,683.8 361.5,681.8 367.4,705.8 373.2,673.4 376.4,657.8 382.3,657.8 387.5,679.9 392.6,682.5 400.4,661.7 404.3,703.2 412.1,707.1 415.3,705.8 418.6,685.1 420.0,682.5 438.2,683.8 442.7,704.5 447.2,685.1 451.1,705.8 455.7,683.8 460.8,659.1 465.4,682.5 488.7,682.5 493.3,663.0 497.8,682.5 508.2,682.5 512.1,701.9 517.2,660.4 526.3,683.8 532.2,707.7 536.7,700.6 540.6,633.2 544.5,633.8 549.0,698.0 554.8,751.2 560.0,730.4 563.9,727.8 567.2,695.4 573.0,640.3 576.9,682.5 578.2,703.2 582.1,682.5 587.3,660.4 592.4,683.8 601.5,704.5 605.4,686.3 610.6,683.8 617.1,685.1 622.3,707.1 626.8,695.4 628.8,685.1 640.4,683.8 646.9,703.2 652.7,661.7 660.0,695.4 661.9,705.8 666.5,683.1 675.6,684.4 680.7,661.1 685.9,682.5 689.8,683.8 694.4,705.8 698.9,705.8 704.1,683.1 708.6,683.8 713.2,704.5 718.3,640.3 722.2,679.9 727.4,635.1 736.5,704.5 741.0,704.5 745.6,687.6 750.8,703.2 761.1,657.8 765.0,659.1 769.6,640.3 774.1,677.3 778.0,659.8 782.5,683.8 783.8,703.2 787.7,683.8 802.6,683.8 806.5,727.2 811.7,685.1 814.3,683.8 818.2,705.8 822.1,695.4 834.4,640.3 837.6,682.5 842.2,705.8 848.0,685.1 859.7,683.8 872.0,662.4 876.5,695.4 881.7,729.1 891.4,662.4 900.0,751.2 905.8,665.6 909.7,683.8 919.4,682.5 924.0,661.1 927.9,682.5 933.1,704.5 937.6,679.9 942.8,631.2 979.1,631.2 984.3,666.9 989.5,746.0 993.4,657.8 995.9,633.2 998.5,720.1 1003.7,666.9 1008.9,631.2 1012.8,631.2 1017.3,681.2 1022.5,647.4 1026.4,653.9 1031.0,698.0 1037.4,760.3 1042.6,744.7 1050.4,633.2 1055.6,666.9 1060.1,753.8 1064.7,666.9 1068.6,631.2 1073.7,631.2 1078.9,641.0 1083.5,738.2 1088.7,647.4 1091.9,705.8 1098.4,762.8 1102.3,762.8 1106.2,644.9 1111.3,643.6 1116.5,698.0 1120.4,653.9 1125.6,633.2 1130.1,646.2 1134.0,633.2 1140.0,746.0 1144.5,633.2 1151.7,699.3 1158.2,631.2 1163.3,631.2 1167.9,692.8 1172.4,633.2 1177.6,753.8 1184.7,633.2 1191.9,739.5 1200.3,642.3 1205.5,696.7 1210.0,631.2 1215.2,631.2 1219.1,698.0 1225.6,631.2 1233.4,700.6 1237.9,639.7 1242.4,701.9 1247.6,631.2 1251.5,641.0 1258.0,631.2 1265.8,641.0 1271.0,631.2 1282.6,631.2 1289.1,643.6 1293.6,748.6 1302.1,631.2 1307.3,631.2 1312.4,759.0 1317.6,647.4 1320.0,650.0 1325.8,651.3 1331.7,700.6 1336.2,647.4 1340.7,647.4 1345.3,755.0 1353.7,647.4 1358.9,631.2 1363.4,631.2 1367.9,700.6 1373.1,633.2 1377.0,647.4 1382.2,756.3 1387.4,633.2 1391.9,692.8 1396.5,633.2 1401.0,756.3 1406.2,657.8 1410.7,704.5 1415.2,633.2 1419.8,647.4 1423.0,688.9 1423.0,762.8 1423,764" fill="rgba(78,175,78,0.7)"/><polyline points="43.9,762.8 88.0,762.8 91.9,756.4 98.3,747.3 107.4,736.9 117.8,726.5 130.8,716.2 143.7,708.4 156.7,701.9 169.7,696.1 182.6,691.5 198.2,687.0 204.7,681.2 274.7,649.4 287.6,654.6 308.4,659.1 353.7,672.1 368.0,676.6 387.5,680.5 400.4,680.5 418.6,683.1 436.9,683.1 440.7,683.8 471.9,683.8 475.8,683.1 504.3,683.8 510.8,683.8 530.2,683.8 538.0,683.8 545.8,681.2 563.9,687.0 588.6,687.0 593.7,685.1 621.0,686.3 623.6,687.0 630.0,685.1 640.4,685.1 646.9,687.0 660.0,687.0 691.1,687.0 695.0,688.3 708.0,687.9 713.2,688.9 718.3,687.0 730.7,687.0 735.2,688.3 745.6,684.4 763.7,684.4 768.9,683.1 815.6,683.1 819.5,684.0 826.0,684.0 835.0,681.4 838.9,683.1 879.1,683.1 881.7,684.4 888.2,683.1 900.0,683.8 915.6,685.1 931.1,685.1 938.9,682.5 954.5,680.5 980.4,675.3 990.8,676.6 998.5,674.0 1012.8,670.1 1029.7,669.5 1041.3,673.4 1053.0,670.8 1060.8,673.1 1073.7,667.5 1089.3,665.6 1102.3,670.1 1120.4,668.2 1140.0,670.8 1151.7,674.0 1163.3,674.0 1167.2,676.0 1185.4,673.4 1194.5,676.6 1204.8,677.5 1219.1,677.0 1228.2,670.1 1242.4,672.7 1247.6,670.1 1265.8,669.8 1272.3,666.9 1278.7,666.2 1289.1,659.1 1295.6,662.0 1306.0,659.5 1312.4,663.0 1320.0,663.6 1327.8,661.0 1331.7,663.0 1340.7,659.7 1349.8,664.9 1357.6,664.3 1365.4,660.4 1371.8,662.3 1378.3,659.1 1384.8,661.0 1397.8,661.0 1401.6,664.3 1405.5,662.3 1413.3,664.9 1423.7,664.9" fill="none" stroke="#55aae6" stroke-width="2"/></g><rect x="42" y="630" width="1383" height="2" fill="#fff"/><rect x="40" y="763" width="1385" height="2" fill="#fff"/><rect x="42" y="630" width="2" height="135" fill="#fff"/><rect x="1423" y="630" width="2" height="135" fill="#fff"/><rect x="78" y="765" width="2" height="2" fill="#fff"/><text x="60.80" y="780.10" font-family="Liberation Sans" font-size="14" fill="#f0f0f0" letter-spacing="-0.669" shape-rendering="geometricPrecision">35:30</text><rect x="124" y="765" width="2" height="2" fill="#fff"/><text x="106.84" y="780.10" font-family="Liberation Sans" font-size="14" fill="#f0f0f0" letter-spacing="-0.669" shape-rendering="geometricPrecision">36:00</text><rect x="170" y="765" width="2" height="2" fill="#fff"/><text x="152.88" y="780.10" font-family="Liberation Sans" font-size="14" fill="#f0f0f0" letter-spacing="-0.669" shape-rendering="geometricPrecision">36:30</text><rect x="216" y="765" width="2" height="2" fill="#fff"/><text x="198.92" y="780.10" font-family="Liberation Sans" font-size="14" fill="#f0f0f0" letter-spacing="-0.669" shape-rendering="geometricPrecision">37:00</text><rect x="262" y="765" width="2" height="2" fill="#fff"/><text x="244.96" y="780.10" font-family="Liberation Sans" font-size="14" fill="#f0f0f0" letter-spacing="-0.669" shape-rendering="geometricPrecision">37:30</text><rect x="308" y="765" width="2" height="2" fill="#fff"/><text x="291.00" y="780.10" font-family="Liberation Sans" font-size="14" fill="#f0f0f0" letter-spacing="-0.669" shape-rendering="geometricPrecision">38:00</text><rect x="354" y="765" width="2" height="2" fill="#fff"/><text x="337.04" y="780.10" font-family="Liberation Sans" font-size="14" fill="#f0f0f0" letter-spacing="-0.669" shape-rendering="geometricPrecision">38:30</text><rect x="400" y="765" width="2" height="2" fill="#fff"/><text x="383.08" y="780.10" font-family="Liberation Sans" font-size="14" fill="#f0f0f0" letter-spacing="-0.669" shape-rendering="geometricPrecision">39:00</text><rect x="446" y="765" width="2" height="2" fill="#fff"/><text x="429.12" y="780.10" font-family="Liberation Sans" font-size="14" fill="#f0f0f0" letter-spacing="-0.669" shape-rendering="geometricPrecision">39:30</text><rect x="492" y="765" width="2" height="2" fill="#fff"/><text x="475.16" y="780.10" font-family="Liberation Sans" font-size="14" fill="#f0f0f0" letter-spacing="-0.669" shape-rendering="geometricPrecision">40:00</text><rect x="538" y="765" width="2" height="2" fill="#fff"/><text x="521.20" y="780.10" font-family="Liberation Sans" font-size="14" fill="#f0f0f0" letter-spacing="-0.669" shape-rendering="geometricPrecision">40:30</text><rect x="584" y="765" width="2" height="2" fill="#fff"/><text x="567.24" y="780.10" font-family="Liberation Sans" font-size="14" fill="#f0f0f0" letter-spacing="-0.669" shape-rendering="geometricPrecision">41:00</text><rect x="630" y="765" width="2" height="2" fill="#fff"/><text x="613.28" y="780.10" font-family="Liberation Sans" font-size="14" fill="#f0f0f0" letter-spacing="-0.669" shape-rendering="geometricPrecision">41:30</text><rect x="676" y="765" width="2" height="2" fill="#fff"/><text x="659.32" y="780.10" font-family="Liberation Sans" font-size="14" fill="#f0f0f0" letter-spacing="-0.669" shape-rendering="geometricPrecision">42:00</text><rect x="722" y="765" width="2" height="2" fill="#fff"/><text x="705.36" y="780.10" font-family="Liberation Sans" font-size="14" fill="#f0f0f0" letter-spacing="-0.669" shape-rendering="geometricPrecision">42:30</text><rect x="768" y="765" width="2" height="2" fill="#fff"/><text x="751.40" y="780.10" font-family="Liberation Sans" font-size="14" fill="#f0f0f0" letter-spacing="-0.669" shape-rendering="geometricPrecision">43:00</text><rect x="814" y="765" width="2" height="2" fill="#fff"/><text x="797.44" y="780.10" font-family="Liberation Sans" font-size="14" fill="#f0f0f0" letter-spacing="-0.669" shape-rendering="geometricPrecision">43:30</text><rect x="860" y="765" width="2" height="2" fill="#fff"/><text x="843.48" y="780.10" font-family="Liberation Sans" font-size="14" fill="#f0f0f0" letter-spacing="-0.669" shape-rendering="geometricPrecision">44:00</text><rect x="906" y="765" width="2" height="2" fill="#fff"/><text x="889.52" y="780.10" font-family="Liberation Sans" font-size="14" fill="#f0f0f0" letter-spacing="-0.669" shape-rendering="geometricPrecision">44:30</text><rect x="952" y="765" width="2" height="2" fill="#fff"/><text x="935.56" y="780.10" font-family="Liberation Sans" font-size="14" fill="#f0f0f0" letter-spacing="-0.669" shape-rendering="geometricPrecision">45:00</text><rect x="998" y="765" width="2" height="2" fill="#fff"/><text x="981.60" y="780.10" font-family="Liberation Sans" font-size="14" fill="#f0f0f0" letter-spacing="-0.669" shape-rendering="geometricPrecision">45:30</text><rect x="1044" y="765" width="2" height="2" fill="#fff"/><text x="1027.64" y="780.10" font-family="Liberation Sans" font-size="14" fill="#f0f0f0" letter-spacing="-0.669" shape-rendering="geometricPrecision">46:00</text><rect x="1090" y="765" width="2" height="2" fill="#fff"/><text x="1073.68" y="780.10" font-family="Liberation Sans" font-size="14" fill="#f0f0f0" letter-spacing="-0.669" shape-rendering="geometricPrecision">46:30</text><rect x="1136" y="765" width="2" height="2" fill="#fff"/><text x="1119.72" y="780.10" font-family="Liberation Sans" font-size="14" fill="#f0f0f0" letter-spacing="-0.669" shape-rendering="geometricPrecision">47:00</text><rect x="1182" y="765" width="2" height="2" fill="#fff"/><text x="1165.76" y="780.10" font-family="Liberation Sans" font-size="14" fill="#f0f0f0" letter-spacing="-0.669" shape-rendering="geometricPrecision">47:30</text><rect x="1229" y="765" width="2" height="2" fill="#fff"/><text x="1211.80" y="780.10" font-family="Liberation Sans" font-size="14" fill="#f0f0f0" letter-spacing="-0.669" shape-rendering="geometricPrecision">48:00</text><rect x="1275" y="765" width="2" height="2" fill="#fff"/><text x="1257.84" y="780.10" font-family="Liberation Sans" font-size="14" fill="#f0f0f0" letter-spacing="-0.669" shape-rendering="geometricPrecision">48:30</text><rect x="1321" y="765" width="2" height="2" fill="#fff"/><text x="1303.88" y="780.10" font-family="Liberation Sans" font-size="14" fill="#f0f0f0" letter-spacing="-0.669" shape-rendering="geometricPrecision">49:00</text><rect x="1367" y="765" width="2" height="2" fill="#fff"/><text x="1349.92" y="780.10" font-family="Liberation Sans" font-size="14" fill="#f0f0f0" letter-spacing="-0.669" shape-rendering="geometricPrecision">49:30</text><rect x="1413" y="765" width="2" height="2" fill="#fff"/><text x="1395.96" y="780.10" font-family="Liberation Sans" font-size="14" fill="#f0f0f0" letter-spacing="-0.669" shape-rendering="geometricPrecision">50:00</text><text x="12.20" y="767.80" font-family="Liberation Sans" font-size="14" fill="#f0f0f0" letter-spacing="-1.097">0</text><text x="1432.00" y="767.80" font-family="Liberation Sans" font-size="14" fill="#f0f0f0" letter-spacing="-1.097">0</text><text x="12.20" y="701.30" font-family="Liberation Sans" font-size="14" fill="#f0f0f0" letter-spacing="-0.989">50</text><text x="1432.00" y="701.30" font-family="Liberation Sans" font-size="14" fill="#f0f0f0" letter-spacing="-0.989">50</text><text x="12.20" y="634.80" font-family="Liberation Sans" font-size="14" fill="#f0f0f0" letter-spacing="-0.986">100</text><text x="1432.00" y="634.80" font-family="Liberation Sans" font-size="14" fill="#f0f0f0" letter-spacing="-0.986">100</text><text x="51.70" y="648.70" font-family="Liberation Sans" font-size="13.5" fill="#f0f0f0" letter-spacing="-0.307">Output Extruder</text><rect x="78" y="793" width="1" height="131" fill="#000"/><rect x="124" y="793" width="1" height="131" fill="#000"/><rect x="170" y="793" width="1" height="131" fill="#000"/><rect x="216" y="793" width="1" height="131" fill="#000"/><rect x="262" y="793" width="1" height="131" fill="#000"/><rect x="308" y="793" width="1" height="131" fill="#000"/><rect x="354" y="793" width="1" height="131" fill="#000"/><rect x="400" y="793" width="1" height="131" fill="#000"/><rect x="446" y="793" width="1" height="131" fill="#000"/><rect x="492" y="793" width="1" height="131" fill="#000"/><rect x="538" y="793" width="1" height="131" fill="#000"/><rect x="584" y="793" width="1" height="131" fill="#000"/><rect x="630" y="793" width="1" height="131" fill="#000"/><rect x="676" y="793" width="1" height="131" fill="#000"/><rect x="722" y="793" width="1" height="131" fill="#000"/><rect x="768" y="793" width="1" height="131" fill="#000"/><rect x="814" y="793" width="1" height="131" fill="#000"/><rect x="860" y="793" width="1" height="131" fill="#000"/><rect x="906" y="793" width="1" height="131" fill="#000"/><rect x="952" y="793" width="1" height="131" fill="#000"/><rect x="998" y="793" width="1" height="131" fill="#000"/><rect x="1044" y="793" width="1" height="131" fill="#000"/><rect x="1090" y="793" width="1" height="131" fill="#000"/><rect x="1136" y="793" width="1" height="131" fill="#000"/><rect x="1182" y="793" width="1" height="131" fill="#000"/><rect x="1229" y="793" width="1" height="131" fill="#000"/><rect x="1275" y="793" width="1" height="131" fill="#000"/><rect x="1321" y="793" width="1" height="131" fill="#000"/><rect x="1367" y="793" width="1" height="131" fill="#000"/><rect x="1413" y="793" width="1" height="131" fill="#000"/><rect x="44" y="858" width="1379" height="1" fill="#000"/><g clip-path="url(#c3)" shape-rendering="geometricPrecision"><polygon points="44.0,925.0 83.4,923.8 86.7,792.6 420.0,792.9 512.7,792.9 516.6,813.0 521.1,794.2 525.0,794.2 535.4,816.2 541.9,792.9 545.1,792.9 549.7,834.4 554.8,804.6 560.0,818.8 563.3,864.2 568.5,837.0 574.3,861.6 582.7,908.3 587.3,877.2 610.6,923.8 619.7,881.1 624.9,918.7 630.0,920.0 633.9,877.2 643.0,833.7 648.2,901.8 657.3,853.8 660.0,877.2 661.3,885.6 664.5,860.3 670.4,838.3 676.2,874.6 684.6,865.5 685.9,859.0 689.2,822.7 693.7,814.3 698.9,843.5 704.1,809.7 708.6,842.2 713.8,799.4 717.1,796.1 722.2,831.8 727.4,834.4 732.0,872.0 735.2,843.5 737.8,831.1 745.6,831.1 750.8,872.0 755.3,833.1 768.9,837.6 774.1,882.4 779.3,844.1 792.3,852.5 797.4,896.6 802.6,816.9 811.1,903.1 815.6,866.8 835.0,873.3 844.1,873.9 848.7,836.3 853.2,873.3 858.4,833.7 862.3,874.6 867.5,875.2 877.8,873.3 881.7,833.7 886.3,872.0 900.0,868.7 914.3,865.5 915.6,859.7 919.4,822.7 924.0,857.7 928.5,822.1 933.7,859.7 942.8,859.7 947.3,816.2 951.9,882.4 957.1,821.4 961.6,892.7 966.1,855.1 973.9,853.8 980.4,855.1 984.9,893.4 989.5,856.4 1005.0,857.1 1024.5,859.7 1028.4,846.1 1031.6,823.4 1036.1,856.4 1041.3,823.4 1045.2,861.6 1050.4,907.0 1054.9,826.6 1060.8,901.8 1064.7,830.5 1069.9,866.8 1083.5,866.8 1088.0,825.3 1091.9,861.6 1097.7,907.0 1102.3,866.8 1111.3,866.8 1116.5,908.9 1120.4,908.9 1125.6,824.0 1130.8,824.0 1135.3,907.0 1140.0,869.4 1144.5,822.7 1148.4,868.1 1153.0,922.5 1158.2,866.8 1163.3,866.8 1167.9,903.1 1172.4,866.8 1177.6,907.6 1182.1,907.6 1186.7,824.0 1191.2,863.6 1233.4,863.6 1237.9,824.7 1242.4,859.0 1247.0,824.0 1251.5,859.0 1256.7,820.8 1261.9,820.8 1265.8,859.0 1271.0,820.8 1280.0,820.8 1283.9,856.4 1289.1,905.7 1293.6,905.7 1298.2,866.8 1303.4,904.4 1312.4,824.0 1316.3,861.6 1320.0,904.3 1326.5,866.8 1335.6,827.9 1340.7,866.8 1345.3,868.7 1349.8,904.3 1355.0,825.3 1358.9,825.3 1361.5,847.3 1366.0,856.4 1368.6,826.6 1373.1,907.6 1382.2,827.2 1387.4,866.8 1391.3,868.7 1396.5,909.5 1401.0,868.0 1410.7,868.0 1415.2,829.2 1420.4,905.6 1423.0,878.4 1423.0,923.8 1423,925" fill="rgba(78,175,78,0.7)"/><polyline points="43.9,923.8 83.4,923.8 88.0,917.4 94.5,907.0 102.2,897.9 112.6,887.5 124.3,877.2 134.7,870.0 146.3,864.2 159.3,858.4 171.0,853.2 183.9,848.6 198.2,844.5 203.4,838.9 216.3,829.2 234.5,815.6 253.9,801.3 268.2,792.9 280.0,792.9 420.0,792.9 544.5,793.5 556.1,796.1 571.7,800.0 584.7,807.2 601.5,816.2 614.5,824.7 630.0,833.7 640.4,838.3 649.5,842.2 660.0,844.8 675.6,851.2 684.6,855.1 698.9,857.7 711.9,859.0 722.2,859.0 732.6,862.3 740.4,862.9 761.1,862.9 770.2,859.7 784.5,855.1 802.6,850.6 815.6,848.6 826.0,849.3 835.0,848.6 848.0,848.6 859.7,848.9 875.2,849.9 888.2,852.5 900.0,855.1 907.8,859.0 919.4,857.7 942.8,859.0 951.9,860.3 964.8,861.0 986.9,861.9 997.2,861.0 1024.5,859.7 1029.7,857.7 1041.3,856.4 1050.4,859.0 1064.7,856.7 1084.1,857.5 1094.5,856.7 1115.2,860.3 1119.1,862.3 1130.8,861.0 1140.0,862.3 1150.4,863.2 1154.3,864.9 1163.3,865.5 1173.7,866.1 1180.2,868.1 1212.6,868.1 1229.5,870.7 1243.7,867.4 1254.1,867.4 1269.7,864.9 1280.0,863.6 1285.2,862.3 1290.4,863.9 1306.0,863.6 1308.6,862.9 1320.0,863.5 1330.4,865.5 1336.8,862.2 1349.8,862.9 1353.7,860.3 1362.8,859.0 1368.6,856.4 1373.1,859.0 1392.6,858.3 1395.2,859.2 1418.5,859.0 1423.7,860.5" fill="none" stroke="#55aae6" stroke-width="2"/></g><rect x="42" y="791" width="1383" height="2" fill="#fff"/><rect x="40" y="924" width="1385" height="2" fill="#fff"/><rect x="42" y="791" width="2" height="135" fill="#fff"/><rect x="1423" y="791" width="2" height="135" fill="#fff"/><rect x="78" y="926" width="2" height="2" fill="#fff"/><text x="60.80" y="941.10" font-family="Liberation Sans" font-size="14" fill="#f0f0f0" letter-spacing="-0.669" shape-rendering="geometricPrecision">35:30</text><rect x="124" y="926" width="2" height="2" fill="#fff"/><text x="106.84" y="941.10" font-family="Liberation Sans" font-size="14" fill="#f0f0f0" letter-spacing="-0.669" shape-rendering="geometricPrecision">36:00</text><rect x="170" y="926" width="2" height="2" fill="#fff"/><text x="152.88" y="941.10" font-family="Liberation Sans" font-size="14" fill="#f0f0f0" letter-spacing="-0.669" shape-rendering="geometricPrecision">36:30</text><rect x="216" y="926" width="2" height="2" fill="#fff"/><text x="198.92" y="941.10" font-family="Liberation Sans" font-size="14" fill="#f0f0f0" letter-spacing="-0.669" shape-rendering="geometricPrecision">37:00</text><rect x="262" y="926" width="2" height="2" fill="#fff"/><text x="244.96" y="941.10" font-family="Liberation Sans" font-size="14" fill="#f0f0f0" letter-spacing="-0.669" shape-rendering="geometricPrecision">37:30</text><rect x="308" y="926" width="2" height="2" fill="#fff"/><text x="291.00" y="941.10" font-family="Liberation Sans" font-size="14" fill="#f0f0f0" letter-spacing="-0.669" shape-rendering="geometricPrecision">38:00</text><rect x="354" y="926" width="2" height="2" fill="#fff"/><text x="337.04" y="941.10" font-family="Liberation Sans" font-size="14" fill="#f0f0f0" letter-spacing="-0.669" shape-rendering="geometricPrecision">38:30</text><rect x="400" y="926" width="2" height="2" fill="#fff"/><text x="383.08" y="941.10" font-family="Liberation Sans" font-size="14" fill="#f0f0f0" letter-spacing="-0.669" shape-rendering="geometricPrecision">39:00</text><rect x="446" y="926" width="2" height="2" fill="#fff"/><text x="429.12" y="941.10" font-family="Liberation Sans" font-size="14" fill="#f0f0f0" letter-spacing="-0.669" shape-rendering="geometricPrecision">39:30</text><rect x="492" y="926" width="2" height="2" fill="#fff"/><text x="475.16" y="941.10" font-family="Liberation Sans" font-size="14" fill="#f0f0f0" letter-spacing="-0.669" shape-rendering="geometricPrecision">40:00</text><rect x="538" y="926" width="2" height="2" fill="#fff"/><text x="521.20" y="941.10" font-family="Liberation Sans" font-size="14" fill="#f0f0f0" letter-spacing="-0.669" shape-rendering="geometricPrecision">40:30</text><rect x="584" y="926" width="2" height="2" fill="#fff"/><text x="567.24" y="941.10" font-family="Liberation Sans" font-size="14" fill="#f0f0f0" letter-spacing="-0.669" shape-rendering="geometricPrecision">41:00</text><rect x="630" y="926" width="2" height="2" fill="#fff"/><text x="613.28" y="941.10" font-family="Liberation Sans" font-size="14" fill="#f0f0f0" letter-spacing="-0.669" shape-rendering="geometricPrecision">41:30</text><rect x="676" y="926" width="2" height="2" fill="#fff"/><text x="659.32" y="941.10" font-family="Liberation Sans" font-size="14" fill="#f0f0f0" letter-spacing="-0.669" shape-rendering="geometricPrecision">42:00</text><rect x="722" y="926" width="2" height="2" fill="#fff"/><text x="705.36" y="941.10" font-family="Liberation Sans" font-size="14" fill="#f0f0f0" letter-spacing="-0.669" shape-rendering="geometricPrecision">42:30</text><rect x="768" y="926" width="2" height="2" fill="#fff"/><text x="751.40" y="941.10" font-family="Liberation Sans" font-size="14" fill="#f0f0f0" letter-spacing="-0.669" shape-rendering="geometricPrecision">43:00</text><rect x="814" y="926" width="2" height="2" fill="#fff"/><text x="797.44" y="941.10" font-family="Liberation Sans" font-size="14" fill="#f0f0f0" letter-spacing="-0.669" shape-rendering="geometricPrecision">43:30</text><rect x="860" y="926" width="2" height="2" fill="#fff"/><text x="843.48" y="941.10" font-family="Liberation Sans" font-size="14" fill="#f0f0f0" letter-spacing="-0.669" shape-rendering="geometricPrecision">44:00</text><rect x="906" y="926" width="2" height="2" fill="#fff"/><text x="889.52" y="941.10" font-family="Liberation Sans" font-size="14" fill="#f0f0f0" letter-spacing="-0.669" shape-rendering="geometricPrecision">44:30</text><rect x="952" y="926" width="2" height="2" fill="#fff"/><text x="935.56" y="941.10" font-family="Liberation Sans" font-size="14" fill="#f0f0f0" letter-spacing="-0.669" shape-rendering="geometricPrecision">45:00</text><rect x="998" y="926" width="2" height="2" fill="#fff"/><text x="981.60" y="941.10" font-family="Liberation Sans" font-size="14" fill="#f0f0f0" letter-spacing="-0.669" shape-rendering="geometricPrecision">45:30</text><rect x="1044" y="926" width="2" height="2" fill="#fff"/><text x="1027.64" y="941.10" font-family="Liberation Sans" font-size="14" fill="#f0f0f0" letter-spacing="-0.669" shape-rendering="geometricPrecision">46:00</text><rect x="1090" y="926" width="2" height="2" fill="#fff"/><text x="1073.68" y="941.10" font-family="Liberation Sans" font-size="14" fill="#f0f0f0" letter-spacing="-0.669" shape-rendering="geometricPrecision">46:30</text><rect x="1136" y="926" width="2" height="2" fill="#fff"/><text x="1119.72" y="941.10" font-family="Liberation Sans" font-size="14" fill="#f0f0f0" letter-spacing="-0.669" shape-rendering="geometricPrecision">47:00</text><rect x="1182" y="926" width="2" height="2" fill="#fff"/><text x="1165.76" y="941.10" font-family="Liberation Sans" font-size="14" fill="#f0f0f0" letter-spacing="-0.669" shape-rendering="geometricPrecision">47:30</text><rect x="1229" y="926" width="2" height="2" fill="#fff"/><text x="1211.80" y="941.10" font-family="Liberation Sans" font-size="14" fill="#f0f0f0" letter-spacing="-0.669" shape-rendering="geometricPrecision">48:00</text><rect x="1275" y="926" width="2" height="2" fill="#fff"/><text x="1257.84" y="941.10" font-family="Liberation Sans" font-size="14" fill="#f0f0f0" letter-spacing="-0.669" shape-rendering="geometricPrecision">48:30</text><rect x="1321" y="926" width="2" height="2" fill="#fff"/><text x="1303.88" y="941.10" font-family="Liberation Sans" font-size="14" fill="#f0f0f0" letter-spacing="-0.669" shape-rendering="geometricPrecision">49:00</text><rect x="1367" y="926" width="2" height="2" fill="#fff"/><text x="1349.92" y="941.10" font-family="Liberation Sans" font-size="14" fill="#f0f0f0" letter-spacing="-0.669" shape-rendering="geometricPrecision">49:30</text><rect x="1413" y="926" width="2" height="2" fill="#fff"/><text x="1395.96" y="941.10" font-family="Liberation Sans" font-size="14" fill="#f0f0f0" letter-spacing="-0.669" shape-rendering="geometricPrecision">50:00</text><text x="12.20" y="928.80" font-family="Liberation Sans" font-size="14" fill="#f0f0f0" letter-spacing="-1.097">0</text><text x="1432.00" y="928.80" font-family="Liberation Sans" font-size="14" fill="#f0f0f0" letter-spacing="-1.097">0</text><text x="12.20" y="862.30" font-family="Liberation Sans" font-size="14" fill="#f0f0f0" letter-spacing="-0.989">50</text><text x="1432.00" y="862.30" font-family="Liberation Sans" font-size="14" fill="#f0f0f0" letter-spacing="-0.989">50</text><text x="12.20" y="795.80" font-family="Liberation Sans" font-size="14" fill="#f0f0f0" letter-spacing="-0.986">100</text><text x="1432.00" y="795.80" font-family="Liberation Sans" font-size="14" fill="#f0f0f0" letter-spacing="-0.986">100</text><text x="51.70" y="809.70" font-family="Liberation Sans" font-size="13.5" fill="#f0f0f0" letter-spacing="-0.411">Output Bed</text></svg><div class="a" style="left:1466px;top:102px;width:454px;height:862px;background:#fff"></div><div class="a" style="left:1919px;top:101px;width:1px;height:864px;background:#6d6d6d"></div><div class="a" style="left:1474px;top:104px;width:95px;height:19px;background:#f0f0f0;border:1px solid #d9d9d9;border-bottom:none"></div><div class="t" style="left:1478.75px;top:107.80px;font-size:12px;color:#000;font-family:'Liberation Sans';transform:scaleX(0.8789);transform-origin:0 0;">Object Placement</div><div class="a" style="left:1568px;top:104px;width:43px;height:19px;background:#f0f0f0;border:1px solid #d9d9d9;border-bottom:none"></div><div class="t" style="left:1575px;top:107.80px;font-size:12px;color:#000;font-family:'Liberation Sans';transform:scaleX(0.8579);transform-origin:0 0;">Slicer</div><div class="a" style="left:1610px;top:104px;width:74px;height:19px;background:#f0f0f0;border:1px solid #d9d9d9;border-bottom:none"></div><div class="t" style="left:1617px;top:107.80px;font-size:12px;color:#000;font-family:'Liberation Sans';transform:scaleX(0.8630);transform-origin:0 0;">Print Preview</div><div class="a" style="left:1769px;top:104px;width:50px;height:19px;background:#f0f0f0;border:1px solid #d9d9d9;border-bottom:none"></div><div class="t" style="left:1774.25px;top:107.80px;font-size:12px;color:#000;font-family:'Liberation Sans';transform:scaleX(0.8475);transform-origin:0 0;">SD Card</div><div class="a" style="left:1769px;top:102px;width:1px;height:21px;background:#d9d9d9"></div><div class="t" style="left:1691.25px;top:105.80px;font-size:12px;color:#000;font-family:'Liberation Sans';transform:scaleX(0.8602);transform-origin:0 0;">Manual Control</div><div class="a" style="left:1471px;top:123px;width:446px;height:833px;background:#f0f0f0;border:1px solid #e3e3e3"></div><div class="a" style="left:1475px;top:124px;width:439px;height:47px;background:#79b2c2;border-top:2px solid #56737b;border-left:2px solid #56737b;border-bottom:1px solid #9cc4d0;border-right:1px solid #9cc4d0"></div><svg class="a" style="left:1481px;top:131px" width="37" height="32" viewBox="0 0 37 32">
<rect x="2.5" y="2.3" width="32" height="27.7" rx="3.5" fill="#f4f4f4" stroke="#000" stroke-width="2.8"/>
<path d="M13 2 L17 7 L21 2z" fill="#000"/><path d="M24 31 L24 27 Q24 24 27 24 L35 24 L35 31z" fill="#000"/>
<path d="M8 13 L11 10 L22 10 L19 13z" fill="#d8d0c0"/><path d="M19 13 L22 10 L22 21 L19 24z" fill="#7a9a50"/>
<rect x="8" y="13" width="11" height="11" fill="#c85020"/>
<text x="9.6" y="22.6" font-family="Liberation Sans" font-weight="bold" font-size="10" fill="#ffd890">R</text>
</svg><div class="t" style="left:1528.6px;top:138.42px;font-size:20.5px;color:#000;font-family:'Liberation Mono';font-weight:bold;transform:scaleX(1.0098);transform-origin:0 0;">Idle</div><div class="t" style="left:1479.4px;top:183.20px;font-size:12px;color:#000;font-family:'Liberation Sans';transform:scaleX(0.8664);transform-origin:0 0;">G-Code:</div><div class="a" style="left:1527px;top:179px;width:276px;height:20px;background:#fff;border:1px solid #7a7a7a"></div><div class="a" style="left:1810px;top:180px;width:81px;height:21px;background:#e1e1e1;border:1px solid #adadad"></div><div class="t" style="left:1837.5px;top:184.80px;font-size:12px;color:#000;font-family:'Liberation Sans';transform:scaleX(0.8526);transform-origin:0 0;">Send</div><svg class="a" style="left:1476px;top:210px" width="444" height="400" viewBox="1476 210 444 400"><defs>
<linearGradient id="bar" x1="0" y1="0" x2="0" y2="1"><stop offset="0" stop-color="#8fbcc8"/><stop offset="0.35" stop-color="#6d9eaa"/><stop offset="1" stop-color="#4a7884"/></linearGradient>
<radialGradient id="fld" cx="0.5" cy="0.5" r="0.6"><stop offset="0" stop-color="#d8eaee"/><stop offset="1" stop-color="#b4ccd2"/></radialGradient>
<radialGradient id="knob" cx="0.5" cy="0.5" r="0.5"><stop offset="0" stop-color="#7fb2c0"/><stop offset="0.85" stop-color="#5a909e"/><stop offset="1" stop-color="#4a7e8c"/></radialGradient>
<linearGradient id="ring" x1="0" y1="0" x2="0" y2="1"><stop offset="0" stop-color="#6a9eac"/><stop offset="1" stop-color="#4c808e"/></linearGradient>
<radialGradient id="btn" cx="0.45" cy="0.4" r="0.6"><stop offset="0" stop-color="#7cb0bc"/><stop offset="1" stop-color="#4a7c88"/></radialGradient>
<radialGradient id="gbtn" cx="0.45" cy="0.4" r="0.6"><stop offset="0" stop-color="#66ea50"/><stop offset="1" stop-color="#38c028"/></radialGradient>
<linearGradient id="sl" x1="0" y1="0" x2="0" y2="1"><stop offset="0" stop-color="#5f95a3"/><stop offset="0.3" stop-color="#80b8c6"/><stop offset="0.7" stop-color="#76aebc"/><stop offset="1" stop-color="#4f8290"/></linearGradient>
<linearGradient id="temp" x1="0" y1="0" x2="1" y2="0"><stop offset="0" stop-color="#0000ff"/><stop offset="0.2" stop-color="#00ffff"/><stop offset="0.45" stop-color="#00ff00"/><stop offset="0.75" stop-color="#ffff00"/><stop offset="1" stop-color="#ff0000"/></linearGradient>
<pattern id="ticks" x="1528" y="0" width="4" height="20" patternUnits="userSpaceOnUse"><rect x="0" y="0" width="1" height="20" fill="#2a5864" opacity="0.75"/></pattern>
<filter id="sh" x="-10%" y="-10%" width="120%" height="120%"><feGaussianBlur in="SourceAlpha" stdDeviation="1.2"/><feOffset dx="0" dy="1" result="b"/><feComponentTransfer><feFuncA type="linear" slope="0.5"/></feComponentTransfer><feMerge><feMergeNode/><feMergeNode in="SourceGraphic"/></feMerge></filter>
</defs><rect x="1478" y="213" width="400" height="27" fill="url(#bar)"/><rect x="1576" y="213" width="2" height="27" fill="#3a5c66"/><rect x="1502" y="217.5" width="69" height="17.5" rx="2" fill="url(#fld)" stroke="#5d7f88" stroke-width="0.8"/><text x="1486.5" y="232.8" font-family="Liberation Sans" font-size="16" fill="#000">X</text><text x="1569" y="232" text-anchor="end" font-family="Liberation Mono" font-weight="bold" font-size="12" fill="#c8102a">0.00</text><rect x="1676" y="213" width="2" height="27" fill="#3a5c66"/><rect x="1602" y="217.5" width="69" height="17.5" rx="2" fill="url(#fld)" stroke="#5d7f88" stroke-width="0.8"/><text x="1586.5" y="232.8" font-family="Liberation Sans" font-size="16" fill="#000">Y</text><text x="1669" y="232" text-anchor="end" font-family="Liberation Mono" font-weight="bold" font-size="12" fill="#c8102a">0.00</text><rect x="1776" y="213" width="2" height="27" fill="#3a5c66"/><rect x="1702" y="217.5" width="69" height="17.5" rx="2" fill="url(#fld)" stroke="#5d7f88" stroke-width="0.8"/><text x="1686.5" y="232.8" font-family="Liberation Sans" font-size="16" fill="#000">Z</text><text x="1769" y="232" text-anchor="end" font-family="Liberation Mono" font-weight="bold" font-size="12" fill="#c8102a">0.00</text><rect x="1876" y="213" width="2" height="27" fill="#3a5c66"/><rect x="1786.5" y="218.5" width="88" height="18" fill="#efefef" stroke="#b8c4c8" stroke-width="1"/><text x="1790.60" y="231.50" font-family="Liberation Sans" font-size="12" fill="#000" letter-spacing="-0.916">Extruder 1</text><path d="M1860.5 225 l3.5 3.5 l3.5 -3.5" fill="none" stroke="#333" stroke-width="1"/><g filter="url(#sh)"><circle cx="1573.7" cy="330" r="74.5" fill="url(#ring)" stroke="#1e3a44" stroke-width="1.6"/></g><line x1="1598.4" y1="354.7" x2="1626.0" y2="382.3" stroke="#1e3a44" stroke-width="1.5"/><line x1="1599.4" y1="355.7" x2="1627.0" y2="383.3" stroke="#a8d0da" stroke-width="0.8" opacity="0.6"/><line x1="1549.0" y1="354.7" x2="1521.4" y2="382.3" stroke="#1e3a44" stroke-width="1.5"/><line x1="1550.0" y1="355.7" x2="1522.4" y2="383.3" stroke="#a8d0da" stroke-width="0.8" opacity="0.6"/><line x1="1549.0" y1="305.3" x2="1521.4" y2="277.7" stroke="#1e3a44" stroke-width="1.5"/><line x1="1550.0" y1="306.3" x2="1522.4" y2="278.7" stroke="#a8d0da" stroke-width="0.8" opacity="0.6"/><line x1="1598.4" y1="305.3" x2="1626.0" y2="277.7" stroke="#1e3a44" stroke-width="1.5"/><line x1="1599.4" y1="306.3" x2="1627.0" y2="278.7" stroke="#a8d0da" stroke-width="0.8" opacity="0.6"/><circle cx="1573.7" cy="330" r="35" fill="url(#knob)" stroke="#1e3a44" stroke-width="1.5"/><circle cx="1573.7" cy="330" r="33.5" fill="none" stroke="#a8d0da" stroke-width="0.8" opacity="0.5"/><path d="M1564 282.5 L1573.5 266 L1583 282.5z M1564 377 L1573.5 393.3 L1583 377z M1526.7 319 L1510 328.7 L1526.7 338.3z M1620.8 319 L1638.3 328.7 L1620.8 338.3z" fill="#000"/><text x="1553.40" y="338.60" font-family="Liberation Sans" font-size="29" font-weight="bold" fill="#000" letter-spacing="-0.783">X/Y</text><path d="M1487 399 L1501 386.5 L1515 399" fill="none" stroke="#3a6874" stroke-width="3"/><path d="M1490.5 397 L1501 388 L1511.5 397 L1511.5 408 L1490.5 408z" fill="url(#btn)" stroke="#3a6874" stroke-width="1"/><rect x="1508" y="385" width="3" height="7" fill="#5a909e" stroke="#3a6874" stroke-width="0.8"/><g filter="url(#sh)"><path d="M1684.0,264.2 A74.5,74.5 0 0,1 1758.5,264.2 L1721.2,357.7Z" fill="url(#ring)" stroke="#1e3a44" stroke-width="1.6"/><path d="M1684.0,393.2 A74.5,74.5 0 0,0 1758.5,393.2 L1721.2,299.7Z" fill="url(#ring)" stroke="#1e3a44" stroke-width="1.6"/></g><circle cx="1721.25" cy="328.7" r="34.5" fill="url(#knob)" stroke="#1e3a44" stroke-width="1.5"/><circle cx="1721.25" cy="328.7" r="33" fill="none" stroke="#a8d0da" stroke-width="0.8" opacity="0.5"/><path d="M1711.55 281.5 L1721.25 264.5 L1730.95 281.5z" fill="#000"/><g filter="url(#sh)"><path d="M1784.0,264.2 A74.5,74.5 0 0,1 1858.5,264.2 L1821.2,357.7Z" fill="url(#ring)" stroke="#1e3a44" stroke-width="1.6"/><path d="M1784.0,393.2 A74.5,74.5 0 0,0 1858.5,393.2 L1821.2,299.7Z" fill="url(#ring)" stroke="#1e3a44" stroke-width="1.6"/></g><circle cx="1821.25" cy="328.7" r="34.5" fill="url(#knob)" stroke="#1e3a44" stroke-width="1.5"/><circle cx="1821.25" cy="328.7" r="33" fill="none" stroke="#a8d0da" stroke-width="0.8" opacity="0.5"/><path d="M1811.55 281.5 L1821.25 264.5 L1830.95 281.5z" fill="#000"/><path d="M1711.55 376.5 L1721.25 393.5 L1730.95 376.5z" fill="#000"/><text x="1712.30" y="338.80" font-family="Liberation Sans" font-size="28" font-weight="bold" fill="#000" letter-spacing="0.391">Z</text><line x1="1821.25" y1="362" x2="1821.25" y2="404" stroke="#1e3a44" stroke-width="1.5"/><path d="M1802.5 376.7 L1813.3 381 L1806.7 387.5z" fill="#000"/><path d="M1828.3 372 L1838 372.3 L1834.5 380.5z M1831.5 380.5 L1842.3 381.2 L1838.2 392.5z" fill="#000"/><path d="M1819.5 314 h8.5 v17 l-4.25 10 l-4.25 -10z" fill="#000"/><path d="M1814.80,324.50 L1814.69,325.78 L1817.46,326.69 L1816.09,330.00 L1813.49,328.67 L1812.66,329.66 L1811.67,330.49 L1813.00,333.09 L1809.69,334.46 L1808.78,331.69 L1807.50,331.80 L1806.22,331.69 L1805.31,334.46 L1802.00,333.09 L1803.33,330.49 L1802.34,329.66 L1801.51,328.67 L1798.91,330.00 L1797.54,326.69 L1800.31,325.78 L1800.20,324.50 L1800.31,323.22 L1797.54,322.31 L1798.91,319.00 L1801.51,320.33 L1802.34,319.34 L1803.33,318.51 L1802.00,315.91 L1805.31,314.54 L1806.22,317.31 L1807.50,317.20 L1808.78,317.31 L1809.69,314.54 L1813.00,315.91 L1811.67,318.51 L1812.66,319.34 L1813.49,320.33 L1816.09,319.00 L1817.46,322.31 L1814.69,323.22Z M1810.90,324.50 A3.4,3.4 0 1,0 1804.10,324.50 A3.4,3.4 0 1,0 1810.90,324.50Z" fill="#000" fill-rule="evenodd"/><path d="M1490.5 429.3 A12.5 12.5 0 1 0 1503.5 429.3" fill="none" stroke="#35606c" stroke-width="5.6" stroke-linecap="round"/><path d="M1490.5 429.3 A12.5 12.5 0 1 0 1503.5 429.3" fill="none" stroke="#5e96a4" stroke-width="3" stroke-linecap="round"/><line x1="1497" y1="424" x2="1497" y2="437" stroke="#35606c" stroke-width="5.4" stroke-linecap="round"/><line x1="1497" y1="424" x2="1497" y2="437" stroke="#5e96a4" stroke-width="3" stroke-linecap="round"/><circle cx="1542" cy="438.8" r="13" fill="none" stroke="#35606c" stroke-width="4.4"/><circle cx="1542" cy="438.8" r="13" fill="none" stroke="#5e96a4" stroke-width="2"/><rect x="1536" y="434.3" width="13" height="9" fill="#b8dce4" stroke="#3e6c78" stroke-width="1.2"/><line x1="1531" y1="438.8" x2="1536" y2="438.8" stroke="#3e6c78" stroke-width="1.2"/><line x1="1533" y1="447.8" x2="1551" y2="429.8" stroke="#3e6c78" stroke-width="2"/><circle cx="1587" cy="438.8" r="15" fill="url(#btn)" stroke="#3e6c78" stroke-width="1"/><text x="1587.3" y="449.0" text-anchor="middle" font-family="Liberation Sans" font-weight="bold" font-size="28" fill="#f4fafc" stroke="#2e5c68" stroke-width="1">P</text><circle cx="1632" cy="438.8" r="15" fill="url(#btn)" stroke="#3e6c78" stroke-width="1"/><text x="1632.3" y="449.0" text-anchor="middle" font-family="Liberation Sans" font-weight="bold" font-size="28" fill="#f4fafc" stroke="#2e5c68" stroke-width="1">1</text><circle cx="1677" cy="438.8" r="15" fill="url(#btn)" stroke="#3e6c78" stroke-width="1"/><text x="1677.3" y="449.0" text-anchor="middle" font-family="Liberation Sans" font-weight="bold" font-size="28" fill="#f4fafc" stroke="#2e5c68" stroke-width="1">2</text><circle cx="1722" cy="438.8" r="15" fill="url(#btn)" stroke="#3e6c78" stroke-width="1"/><text x="1722.3" y="449.0" text-anchor="middle" font-family="Liberation Sans" font-weight="bold" font-size="28" fill="#f4fafc" stroke="#2e5c68" stroke-width="1">3</text><circle cx="1767" cy="438.8" r="15" fill="url(#btn)" stroke="#3e6c78" stroke-width="1"/><text x="1767.3" y="449.0" text-anchor="middle" font-family="Liberation Sans" font-weight="bold" font-size="28" fill="#f4fafc" stroke="#2e5c68" stroke-width="1">4</text><circle cx="1812" cy="438.8" r="15" fill="url(#btn)" stroke="#3e6c78" stroke-width="1"/><text x="1812.3" y="449.0" text-anchor="middle" font-family="Liberation Sans" font-weight="bold" font-size="28" fill="#f4fafc" stroke="#2e5c68" stroke-width="1">5</text><circle cx="1857" cy="438.8" r="15" fill="url(#gbtn)" stroke="#2a8a20" stroke-width="1"/><text x="1857" y="449.0" text-anchor="middle" font-family="Liberation Sans" font-weight="bold" font-size="28" fill="#f4fff4" stroke="#2a7a20" stroke-width="1">?</text><rect x="1524.5" y="469.5" width="310.5" height="12.5" rx="6.2" fill="url(#sl)" stroke="#4d7c88" stroke-width="0.8"/><rect x="1528" y="470.2" width="303" height="11" fill="url(#ticks)"/><path d="M1609.7 466 q3 4 3 9.5 q0 5.5 -3 9.5 q-3 -4 -3 -9.5 q0 -5.5 3 -9.5z" fill="#000"/><text x="1533" y="480" font-family="Liberation Sans" font-weight="bold" font-size="10" fill="#0c1830" letter-spacing="-0.1">Feedrate</text><rect x="1524.5" y="501.5" width="310.5" height="12.5" rx="6.2" fill="url(#sl)" stroke="#4d7c88" stroke-width="0.8"/><rect x="1528" y="502.2" width="303" height="11" fill="url(#ticks)"/><path d="M1838 498 q3 4 3 9.5 q0 5.5 -3 9.5 q-3 -4 -3 -9.5 q0 -5.5 3 -9.5z" fill="#000"/><text x="1533" y="512" font-family="Liberation Sans" font-weight="bold" font-size="10" fill="#0c1830">Fan</text><rect x="1524.5" y="533.5" width="310.5" height="13" fill="url(#temp)"/><rect x="1524.5" y="533.5" width="310.5" height="13" fill="none" stroke="#9a9a9a" stroke-width="0.6" opacity="0.6"/><text x="1533" y="544.0" font-family="Liberation Sans" font-weight="bold" font-size="10" fill="#fff">Bed Temperature</text><text x="1830" y="544.0" text-anchor="end" font-family="Liberation Sans" font-weight="bold" font-size="10" fill="#fff" letter-spacing="-0.2">60.01°C</text><path d="M1678.6 530.5 h6 l-2.2 3.5 q2.2 3 2.2 6 q0 3 -2.2 6 l2.2 3.5 h-6 l2.2 -3.5 q-2.2 -3 -2.2 -6 q0 -3 2.2 -6z" fill="#000"/><rect x="1524.5" y="565.2" width="310.5" height="13" fill="url(#temp)"/><rect x="1524.5" y="565.2" width="310.5" height="13" fill="none" stroke="#9a9a9a" stroke-width="0.6" opacity="0.6"/><text x="1533" y="575.7" font-family="Liberation Sans" font-weight="bold" font-size="10" fill="#fff">Extruder 1</text><text x="1680" y="575.7" text-anchor="middle" font-family="Liberation Sans" font-weight="bold" font-size="10" fill="#0a3a0a" letter-spacing="-0.2">256.82°C</text><path d="M1812.8 562.2 h6 l-2.2 3.5 q2.2 3 2.2 6 q0 3 -2.2 6 l2.2 3.5 h-6 l2.2 -3.5 q-2.2 -3 -2.2 -6 q0 -3 2.2 -6z" fill="#000"/><rect x="1844.5" y="466.5" width="44" height="19" fill="#fff" stroke="#adadad" stroke-width="1"/><text x="1847" y="480.5" font-family="Liberation Sans" font-size="12" fill="#000" letter-spacing="-0.3">100</text><rect x="1873.5" y="467.5" width="14" height="17" fill="#f0f0f0" stroke="#dcdcdc" stroke-width="0.6"/><path d="M1877.0 474.0 l3.5 -3.5 l3.5 3.5z M1877.0 478.0 l3.5 3.5 l3.5 -3.5z" fill="#000"/><rect x="1844.5" y="498" width="44" height="19" fill="#fff" stroke="#adadad" stroke-width="1"/><text x="1847" y="512" font-family="Liberation Sans" font-size="12" fill="#000" letter-spacing="-0.3">100</text><rect x="1873.5" y="499" width="14" height="17" fill="#f0f0f0" stroke="#dcdcdc" stroke-width="0.6"/><path d="M1877.0 505.5 l3.5 -3.5 l3.5 3.5z M1877.0 509.5 l3.5 3.5 l3.5 -3.5z" fill="#000"/><rect x="1844.5" y="530.5" width="46.5" height="19" fill="#fff" stroke="#adadad" stroke-width="1"/><text x="1847" y="544.5" font-family="Liberation Sans" font-size="12" fill="#000" letter-spacing="-0.3">60</text><rect x="1876.0" y="531.5" width="14" height="17" fill="#f0f0f0" stroke="#dcdcdc" stroke-width="0.6"/><path d="M1879.5 538.0 l3.5 -3.5 l3.5 3.5z M1879.5 542.0 l3.5 3.5 l3.5 -3.5z" fill="#000"/><rect x="1844.5" y="562" width="46.5" height="19" fill="#fff" stroke="#adadad" stroke-width="1"/><text x="1847" y="576" font-family="Liberation Sans" font-size="12" fill="#000" letter-spacing="-0.3">260</text><rect x="1876.0" y="563" width="14" height="17" fill="#f0f0f0" stroke="#dcdcdc" stroke-width="0.6"/><path d="M1879.5 569.5 l3.5 -3.5 l3.5 3.5z M1879.5 573.5 l3.5 3.5 l3.5 -3.5z" fill="#000"/><g fill="#000"><circle cx="1506" cy="469.5" r="2.3"/><path d="M1497 473 l6 -1.5 l3 2 l-2 5 l3 3 l-1 5 l-1.6 -0.3 l0.6 -4 l-3.5 -2.5 l-3 4.5 l-5 3 l-0.8 -1.3 l4.5 -3 l3 -7 l-2.5 0.8 l-1.5 2.5 l-1.3 -0.8z"/><path d="M1505 476 l4 2 l-0.6 1.3 l-4 -2z"/></g><g stroke="#000" stroke-width="0.7"><line x1="1486" y1="472" x2="1496" y2="472"/><line x1="1487" y1="476" x2="1497" y2="476"/><line x1="1486" y1="480" x2="1494" y2="480"/></g><g fill="#000"><ellipse cx="1492" cy="503" rx="3.5" ry="5" transform="rotate(-30 1492 503)"/><ellipse cx="1502" cy="505" rx="3.5" ry="5" transform="rotate(60 1502 505)"/><ellipse cx="1492" cy="513" rx="3.5" ry="5" transform="rotate(45 1492 513)"/><ellipse cx="1501" cy="513" rx="3.5" ry="5" transform="rotate(-45 1501 513)"/><circle cx="1496.5" cy="508.5" r="2.5"/></g><line x1="1486" y1="518" x2="1506" y2="498" stroke="#e02020" stroke-width="1.6"/><g fill="none" stroke="#000" stroke-width="1.8"><path d="M1485 531 h22 l2 19 h-26z"/><line x1="1484.5" y1="537.5" x2="1507.5" y2="537.5"/><line x1="1484" y1="543.5" x2="1508.5" y2="543.5"/><line x1="1491.5" y1="531" x2="1490.5" y2="550"/><line x1="1500" y1="531" x2="1501" y2="550"/></g><path d="M1482 562 h6 v14 l-3 7 l-3 -7z" fill="#000"/><text x="1489" y="578" font-family="Liberation Sans" font-size="17" fill="#000">1</text></svg><div class="a" style="left:4px;top:955px;width:1462px;height:2px;background:#fff"></div><div class="a" style="left:1px;top:957px;width:1465px;height:2px;background:#e3e3e3"></div><div class="a" style="left:0px;top:959px;width:1920px;height:1px;background:#6d6d6d"></div><div class="a" style="left:0px;top:960px;width:1920px;height:4px;background:#fff"></div><div class="a" style="left:0px;top:964px;width:1920px;height:1px;background:#6d6d6d"></div><div class="a" style="left:0px;top:965px;width:1px;height:92px;background:#6d6d6d"></div><div class="a" style="left:1px;top:965px;width:1px;height:24px;background:#fff"></div><div class="a" style="left:0px;top:965px;width:1920px;height:92px;background:#f0f0f0"></div><div class="a" style="left:1919px;top:965px;width:1px;height:92px;background:#6d6d6d"></div><div class="t" style="left:7.1px;top:971.38px;font-size:12.5px;color:#000;font-family:'Liberation Sans';transform:scaleX(0.8439);transform-origin:0 0;">Show in Log:</div><svg class="a" style="left:84.5px;top:972px" width="12" height="12"><defs><radialGradient id="rb84" cx="0.5" cy="0.45" r="0.5"><stop offset="0" stop-color="#c8f4ff"/><stop offset="1" stop-color="#6cc8f0"/></radialGradient></defs><circle cx="5.8" cy="6" r="5" fill="url(#rb84)" stroke="#2a3a48" stroke-width="1.4"/></svg><div class="t" style="left:97.2px;top:971.38px;font-size:12.5px;color:#000;font-family:'Liberation Sans';transform:scaleX(0.8104);transform-origin:0 0;">Commands</div><svg class="a" style="left:171px;top:972px" width="12" height="12"><defs><radialGradient id="rb171" cx="0.5" cy="0.45" r="0.5"><stop offset="0" stop-color="#c8f4ff"/><stop offset="1" stop-color="#6cc8f0"/></radialGradient></defs><circle cx="5.8" cy="6" r="5" fill="url(#rb171)" stroke="#2a3a48" stroke-width="1.4"/></svg><div class="t" style="left:185.4px;top:971.38px;font-size:12.5px;color:#000;font-family:'Liberation Sans';transform:scaleX(0.8152);transform-origin:0 0;">Infos</div><svg class="a" style="left:229px;top:972px" width="12" height="12"><defs><radialGradient id="rb229" cx="0.5" cy="0.45" r="0.5"><stop offset="0" stop-color="#c8f4ff"/><stop offset="1" stop-color="#6cc8f0"/></radialGradient></defs><circle cx="5.8" cy="6" r="5" fill="url(#rb229)" stroke="#2a3a48" stroke-width="1.4"/></svg><div class="t" style="left:242.8px;top:971.38px;font-size:12.5px;color:#000;font-family:'Liberation Sans';transform:scaleX(0.8559);transform-origin:0 0;">Warnings</div><svg class="a" style="left:309px;top:972px" width="12" height="12"><defs><radialGradient id="rb309" cx="0.5" cy="0.45" r="0.5"><stop offset="0" stop-color="#c8f4ff"/><stop offset="1" stop-color="#6cc8f0"/></radialGradient></defs><circle cx="5.8" cy="6" r="5" fill="url(#rb309)" stroke="#2a3a48" stroke-width="1.4"/></svg><div class="t" style="left:322.8px;top:971.38px;font-size:12.5px;color:#000;font-family:'Liberation Sans';transform:scaleX(0.7787);transform-origin:0 0;">Errors</div><svg class="a" style="left:371px;top:972px" width="12" height="12"><defs><radialGradient id="rb371" cx="0.5" cy="0.45" r="0.5"><stop offset="0" stop-color="#c8f4ff"/><stop offset="1" stop-color="#6cc8f0"/></radialGradient></defs><circle cx="5.8" cy="6" r="5" fill="url(#rb371)" stroke="#2a3a48" stroke-width="1.4"/></svg><div class="t" style="left:384.5px;top:971.38px;font-size:12.5px;color:#000;font-family:'Liberation Sans';transform:scaleX(0.8365);transform-origin:0 0;">ACK</div><svg class="a" style="left:427px;top:972px" width="12" height="12"><defs><radialGradient id="rb427" cx="0.5" cy="0.45" r="0.5"><stop offset="0" stop-color="#c8f4ff"/><stop offset="1" stop-color="#6cc8f0"/></radialGradient></defs><circle cx="5.8" cy="6" r="5" fill="url(#rb427)" stroke="#2a3a48" stroke-width="1.4"/></svg><div class="t" style="left:440.7px;top:971.38px;font-size:12.5px;color:#000;font-family:'Liberation Sans';transform:scaleX(0.8354);transform-origin:0 0;">Auto Scroll</div><svg class="a" style="left:514px;top:970px" width="14" height="15"><rect x="2" y="3.5" width="10" height="1.5" fill="#777"/><rect x="5" y="1.5" width="4" height="2" fill="#777"/><path d="M3 6 h8 l-0.8 8 h-6.4z" fill="#8a8a8a"/><g stroke="#ddd" stroke-width="0.8"><line x1="5.5" y1="7" x2="5.5" y2="13"/><line x1="7" y1="7" x2="7" y2="13"/><line x1="8.5" y1="7" x2="8.5" y2="13"/></g></svg><div class="t" style="left:530.3px;top:971.38px;font-size:12.5px;color:#000;font-family:'Liberation Sans';transform:scaleX(0.8321);transform-origin:0 0;">Clear Log</div><svg class="a" style="left:597px;top:969px" width="16" height="16"><path d="M1.5 4.5 v8 h6 v-6 l-2 -2z" fill="#fff" stroke="#777" stroke-width="1"/><path d="M6.5 2.5 h5 l2.5 2.5 v9 h-7.5z" fill="#fff" stroke="#777" stroke-width="1"/></svg><div class="t" style="left:614.4px;top:971.38px;font-size:12.5px;color:#000;font-family:'Liberation Sans';transform:scaleX(0.8291);transform-origin:0 0;">Copy</div><div class="a" style="left:0px;top:990px;width:1904px;height:66px;background:#fff;border-left:1px solid #6d6d6d;border-bottom:1px solid #a0a0a0"></div><div class="a" style="left:1px;top:990px;width:1902px;height:16px;background:#faede2"></div><div class="a" style="left:1px;top:990px;width:102px;height:16px;background:#5a9ca0"></div><div class="t" style="left:6.5px;top:993.29px;font-size:12.25px;color:#f0f8f8;font-family:'Liberation Mono';">18:50:07.462</div><div class="t" style="left:109.6px;top:993.29px;font-size:12.25px;color:#1a1a80;font-family:'Liberation Mono';">N317 M105*34</div><div class="a" style="left:1px;top:1006px;width:1902px;height:16px;background:#ffffff"></div><div class="a" style="left:1px;top:1006px;width:102px;height:16px;background:#5a9ca0"></div><div class="t" style="left:6.5px;top:1009.29px;font-size:12.25px;color:#f0f8f8;font-family:'Liberation Mono';">18:50:07.462</div><div class="t" style="left:109.6px;top:1009.29px;font-size:12.25px;color:#1a1a80;font-family:'Liberation Mono';">ok 317</div><div class="a" style="left:1px;top:1022px;width:1902px;height:16px;background:#faede2"></div><div class="a" style="left:1px;top:1022px;width:102px;height:16px;background:#5a9ca0"></div><div class="t" style="left:6.5px;top:1025.29px;font-size:12.25px;color:#f0f8f8;font-family:'Liberation Mono';">18:50:07.493</div><div class="t" style="left:109.6px;top:1025.29px;font-size:12.25px;color:#1a1a80;font-family:'Liberation Mono';">T:256.82 /260 B:60.01 /60 B@:110 @:124</div><div class="a" style="left:1px;top:1038px;width:1902px;height:16px;background:#ffffff"></div><div class="a" style="left:1px;top:1038px;width:102px;height:16px;background:#5a9ca0"></div><div class="t" style="left:6.5px;top:1041.29px;font-size:12.25px;color:#f0f8f8;font-family:'Liberation Mono';">18:50:08.462</div><div class="t" style="left:109.6px;top:1041.29px;font-size:12.25px;color:#1a1a80;font-family:'Liberation Mono';">wait</div><div class="a" style="left:1px;top:1054px;width:1902px;height:2px;background:#fff"></div><div class="a" style="left:1903px;top:989px;width:15px;height:68px;background:#f0f0f0"></div><svg class="a" style="left:1903px;top:989px" width="15" height="68"><path d="M4 11 l3.5 -3.5 l3.5 3.5" fill="none" stroke="#444" stroke-width="1.3"/><rect x="2" y="35" width="12" height="17" fill="#cdcdcd"/><path d="M4 59 l3.5 3.5 l3.5 -3.5" fill="none" stroke="#444" stroke-width="1.3"/></svg><div class="a" style="left:0px;top:1057px;width:1920px;height:23px;background:#f0f0f0;border-top:1px solid #707070"></div><div class="t" style="left:4.9px;top:1063.80px;font-size:12px;color:#000;font-family:'Liberation Sans';transform:scaleX(0.9906);transform-origin:0 0;">Connected: default</div><div class="t" style="left:784.4px;top:1063.80px;font-size:12px;color:#000;font-family:'Liberation Sans';transform:scaleX(0.9404);transform-origin:0 0;">Extruder: 256.8/260°C Bed: 60.0/60°C</div><div class="t" style="left:1666.25px;top:1063.80px;font-size:12px;color:#000;font-family:'Liberation Sans';transform:scaleX(0.9685);transform-origin:0 0;">Idle</div><div class="a" style="left:1690px;top:1061px;width:214px;height:16px;background:#e6e6e6;border:1px solid #bcbcbc"></div><div class="a" style="left:0px;top:1078px;width:1920px;height:2px;background:#2a2a2a"></div>
</body></html>
